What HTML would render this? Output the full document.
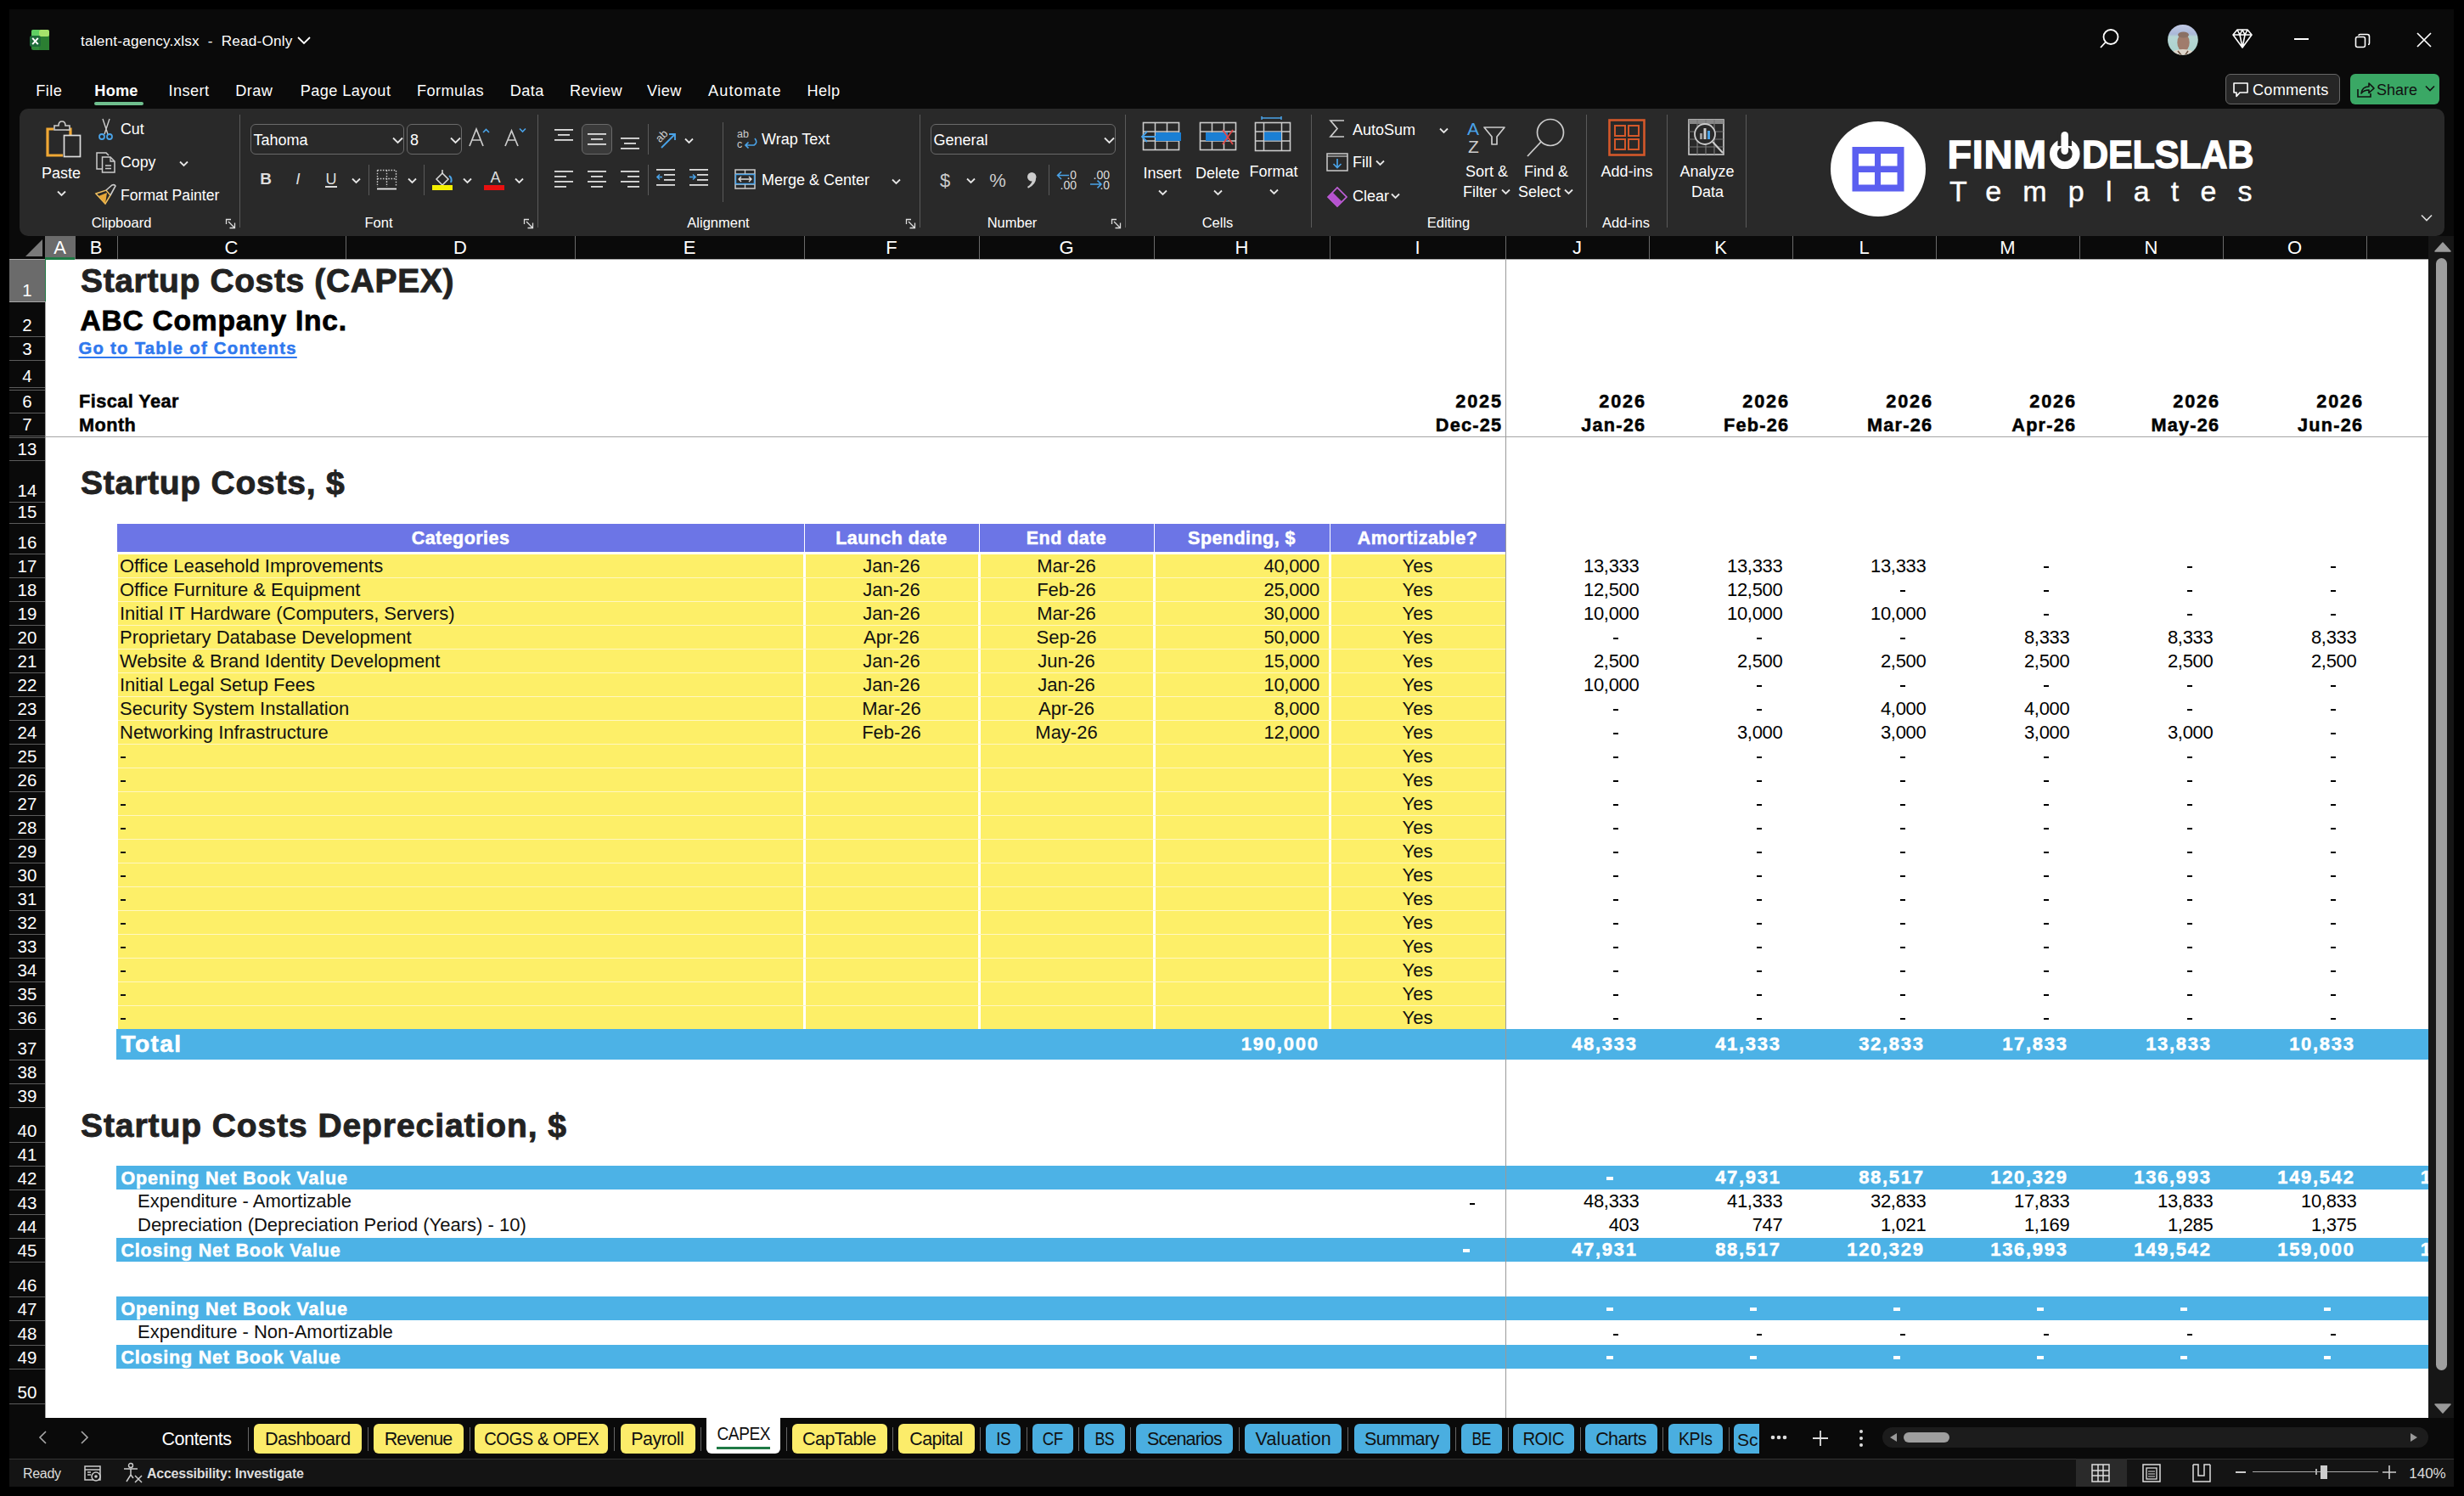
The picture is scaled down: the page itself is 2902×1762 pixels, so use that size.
<!DOCTYPE html><html><head><meta charset="utf-8"><style>
html,body{margin:0;padding:0}
body{width:2902px;height:1762px;background:#000;position:relative;overflow:hidden;font-family:"Liberation Sans", sans-serif}
.t{position:absolute;white-space:pre;line-height:1}
.r{position:absolute}
svg{position:absolute;overflow:visible}
</style></head><body><div class="r" style="left:11px;top:11px;width:2879px;height:1740px;background:#0a0a0a;"></div>
<div class="r" style="left:53px;top:305px;width:2807px;height:1365px;background:#ffffff;"></div>
<div style="position:absolute;left:53px;top:305px;width:2807px;height:1365px;overflow:hidden">
<div style="position:absolute;left:-53px;top:-305px;width:2902px;height:1762px">
<div class="t" style="top:311.3px;font-size:39px;color:#222;font-weight:700;letter-spacing:0.63px;-webkit-text-stroke:0.9px #222;left:95.0px;">Startup Costs (CAPEX)</div>
<div class="t" style="top:360.5px;font-size:33.5px;color:#000;font-weight:700;letter-spacing:0.8px;-webkit-text-stroke:0.8px #000;left:94.5px;">ABC Company Inc.</div>
<div class="t" style="top:400.1px;font-size:20.3px;color:#2f78ee;font-weight:700;letter-spacing:1.26px;-webkit-text-stroke:0.5px #2f78ee;left:92.5px;text-decoration:underline;text-decoration-thickness:2px;text-underline-offset:3px;">Go to Table of Contents</div>
<div class="t" style="top:462.2px;font-size:21.7px;color:#000;font-weight:700;letter-spacing:0.45px;-webkit-text-stroke:0.5px #000;left:93.0px;">Fiscal Year</div>
<div class="t" style="top:490.0px;font-size:21.7px;color:#000;font-weight:700;letter-spacing:0.45px;-webkit-text-stroke:0.5px #000;left:93.0px;">Month</div>
<div class="t" style="top:462.2px;font-size:21.7px;color:#000;font-weight:700;letter-spacing:1.8px;-webkit-text-stroke:0.5px #000;right:1134.0px;margin-right:-1.8px;">2025</div>
<div class="t" style="top:490.0px;font-size:21.7px;color:#000;font-weight:700;letter-spacing:1.2px;-webkit-text-stroke:0.5px #000;right:1134.0px;margin-right:-1.2px;">Dec-25</div>
<div class="t" style="top:462.2px;font-size:21.7px;color:#000;font-weight:700;letter-spacing:1.8px;-webkit-text-stroke:0.5px #000;right:965.0px;margin-right:-1.8px;">2026</div>
<div class="t" style="top:490.0px;font-size:21.7px;color:#000;font-weight:700;letter-spacing:1.2px;-webkit-text-stroke:0.5px #000;right:965.0px;margin-right:-1.2px;">Jan-26</div>
<div class="t" style="top:462.2px;font-size:21.7px;color:#000;font-weight:700;letter-spacing:1.8px;-webkit-text-stroke:0.5px #000;right:796.0px;margin-right:-1.8px;">2026</div>
<div class="t" style="top:490.0px;font-size:21.7px;color:#000;font-weight:700;letter-spacing:1.2px;-webkit-text-stroke:0.5px #000;right:796.0px;margin-right:-1.2px;">Feb-26</div>
<div class="t" style="top:462.2px;font-size:21.7px;color:#000;font-weight:700;letter-spacing:1.8px;-webkit-text-stroke:0.5px #000;right:627.0px;margin-right:-1.8px;">2026</div>
<div class="t" style="top:490.0px;font-size:21.7px;color:#000;font-weight:700;letter-spacing:1.2px;-webkit-text-stroke:0.5px #000;right:627.0px;margin-right:-1.2px;">Mar-26</div>
<div class="t" style="top:462.2px;font-size:21.7px;color:#000;font-weight:700;letter-spacing:1.8px;-webkit-text-stroke:0.5px #000;right:458.0px;margin-right:-1.8px;">2026</div>
<div class="t" style="top:490.0px;font-size:21.7px;color:#000;font-weight:700;letter-spacing:1.2px;-webkit-text-stroke:0.5px #000;right:458.0px;margin-right:-1.2px;">Apr-26</div>
<div class="t" style="top:462.2px;font-size:21.7px;color:#000;font-weight:700;letter-spacing:1.8px;-webkit-text-stroke:0.5px #000;right:289.0px;margin-right:-1.8px;">2026</div>
<div class="t" style="top:490.0px;font-size:21.7px;color:#000;font-weight:700;letter-spacing:1.2px;-webkit-text-stroke:0.5px #000;right:289.0px;margin-right:-1.2px;">May-26</div>
<div class="t" style="top:462.2px;font-size:21.7px;color:#000;font-weight:700;letter-spacing:1.8px;-webkit-text-stroke:0.5px #000;right:120.0px;margin-right:-1.8px;">2026</div>
<div class="t" style="top:490.0px;font-size:21.7px;color:#000;font-weight:700;letter-spacing:1.2px;-webkit-text-stroke:0.5px #000;right:120.0px;margin-right:-1.2px;">Jun-26</div>
<div class="r" style="left:53px;top:514px;width:2807px;height:1px;background:#a6a6a6;"></div>
<div class="t" style="top:548.5px;font-size:39px;color:#222;font-weight:700;letter-spacing:0.78px;-webkit-text-stroke:0.9px #222;left:95.0px;">Startup Costs, $</div>
<div class="r" style="left:138px;top:617px;width:809px;height:33px;background:#6c75e6;"></div>
<div class="r" style="left:948px;top:617px;width:205px;height:33px;background:#6c75e6;"></div>
<div class="r" style="left:1154px;top:617px;width:205px;height:33px;background:#6c75e6;"></div>
<div class="r" style="left:1360px;top:617px;width:206px;height:33px;background:#6c75e6;"></div>
<div class="r" style="left:1567px;top:617px;width:206px;height:33px;background:#6c75e6;"></div>
<div class="t" style="top:623.8px;font-size:21.5px;color:#fff;font-weight:700;letter-spacing:0.45px;-webkit-text-stroke:0.5px #fff;left:-57.5px;width:1200px;text-align:center;">Categories</div>
<div class="t" style="top:623.8px;font-size:21.5px;color:#fff;font-weight:700;letter-spacing:0.45px;-webkit-text-stroke:0.5px #fff;left:450.0px;width:1200px;text-align:center;">Launch date</div>
<div class="t" style="top:623.8px;font-size:21.5px;color:#fff;font-weight:700;letter-spacing:0.45px;-webkit-text-stroke:0.5px #fff;left:656.0px;width:1200px;text-align:center;">End date</div>
<div class="t" style="top:623.8px;font-size:21.5px;color:#fff;font-weight:700;letter-spacing:0.45px;-webkit-text-stroke:0.5px #fff;left:862.5px;width:1200px;text-align:center;">Spending, $</div>
<div class="t" style="top:623.8px;font-size:21.5px;color:#fff;font-weight:700;letter-spacing:0.45px;-webkit-text-stroke:0.5px #fff;left:1069.5px;width:1200px;text-align:center;">Amortizable?</div>
<div class="r" style="left:139px;top:653px;width:807px;height:27px;background:#fdef68;"></div>
<div class="r" style="left:949px;top:653px;width:203px;height:27px;background:#fdef68;"></div>
<div class="r" style="left:1155px;top:653px;width:203px;height:27px;background:#fdef68;"></div>
<div class="r" style="left:1361px;top:653px;width:204px;height:27px;background:#fdef68;"></div>
<div class="r" style="left:1568px;top:653px;width:205px;height:27px;background:#fdef68;"></div>
<div class="t" style="top:655.9px;font-size:22px;color:#111;left:141.0px;">Office Leasehold Improvements</div>
<div class="t" style="top:655.9px;font-size:22px;color:#111;left:450.0px;width:1200px;text-align:center;">Jan-26</div>
<div class="t" style="top:655.9px;font-size:22px;color:#111;left:656.0px;width:1200px;text-align:center;">Mar-26</div>
<div class="t" style="top:655.9px;font-size:22px;color:#111;letter-spacing:-0.3px;right:1348.0px;margin-right:--0.3px;">40,000</div>
<div class="t" style="top:655.9px;font-size:22px;color:#000;letter-spacing:-0.3px;right:971.5px;margin-right:--0.3px;">13,333</div>
<div class="t" style="top:655.9px;font-size:22px;color:#000;letter-spacing:-0.3px;right:802.5px;margin-right:--0.3px;">13,333</div>
<div class="t" style="top:655.9px;font-size:22px;color:#000;letter-spacing:-0.3px;right:633.5px;margin-right:--0.3px;">13,333</div>
<div class="r" style="left:2407px;top:667px;width:6px;height:2px;background:#000;"></div>
<div class="r" style="left:2576px;top:667px;width:6px;height:2px;background:#000;"></div>
<div class="r" style="left:2745px;top:667px;width:6px;height:2px;background:#000;"></div>
<div class="t" style="top:655.9px;font-size:22px;color:#111;left:1069.5px;width:1200px;text-align:center;">Yes</div>
<div class="r" style="left:139px;top:680px;width:1634px;height:1px;background:#fff7c0;"></div>
<div class="r" style="left:139px;top:681px;width:807px;height:27px;background:#fdef68;"></div>
<div class="r" style="left:949px;top:681px;width:203px;height:27px;background:#fdef68;"></div>
<div class="r" style="left:1155px;top:681px;width:203px;height:27px;background:#fdef68;"></div>
<div class="r" style="left:1361px;top:681px;width:204px;height:27px;background:#fdef68;"></div>
<div class="r" style="left:1568px;top:681px;width:205px;height:27px;background:#fdef68;"></div>
<div class="t" style="top:683.9px;font-size:22px;color:#111;left:141.0px;">Office Furniture &amp; Equipment</div>
<div class="t" style="top:683.9px;font-size:22px;color:#111;left:450.0px;width:1200px;text-align:center;">Jan-26</div>
<div class="t" style="top:683.9px;font-size:22px;color:#111;left:656.0px;width:1200px;text-align:center;">Feb-26</div>
<div class="t" style="top:683.9px;font-size:22px;color:#111;letter-spacing:-0.3px;right:1348.0px;margin-right:--0.3px;">25,000</div>
<div class="t" style="top:683.9px;font-size:22px;color:#000;letter-spacing:-0.3px;right:971.5px;margin-right:--0.3px;">12,500</div>
<div class="t" style="top:683.9px;font-size:22px;color:#000;letter-spacing:-0.3px;right:802.5px;margin-right:--0.3px;">12,500</div>
<div class="r" style="left:2238px;top:695px;width:6px;height:2px;background:#000;"></div>
<div class="r" style="left:2407px;top:695px;width:6px;height:2px;background:#000;"></div>
<div class="r" style="left:2576px;top:695px;width:6px;height:2px;background:#000;"></div>
<div class="r" style="left:2745px;top:695px;width:6px;height:2px;background:#000;"></div>
<div class="t" style="top:683.9px;font-size:22px;color:#111;left:1069.5px;width:1200px;text-align:center;">Yes</div>
<div class="r" style="left:139px;top:708px;width:1634px;height:1px;background:#fff7c0;"></div>
<div class="r" style="left:139px;top:709px;width:807px;height:27px;background:#fdef68;"></div>
<div class="r" style="left:949px;top:709px;width:203px;height:27px;background:#fdef68;"></div>
<div class="r" style="left:1155px;top:709px;width:203px;height:27px;background:#fdef68;"></div>
<div class="r" style="left:1361px;top:709px;width:204px;height:27px;background:#fdef68;"></div>
<div class="r" style="left:1568px;top:709px;width:205px;height:27px;background:#fdef68;"></div>
<div class="t" style="top:711.9px;font-size:22px;color:#111;left:141.0px;">Initial IT Hardware (Computers, Servers)</div>
<div class="t" style="top:711.9px;font-size:22px;color:#111;left:450.0px;width:1200px;text-align:center;">Jan-26</div>
<div class="t" style="top:711.9px;font-size:22px;color:#111;left:656.0px;width:1200px;text-align:center;">Mar-26</div>
<div class="t" style="top:711.9px;font-size:22px;color:#111;letter-spacing:-0.3px;right:1348.0px;margin-right:--0.3px;">30,000</div>
<div class="t" style="top:711.9px;font-size:22px;color:#000;letter-spacing:-0.3px;right:971.5px;margin-right:--0.3px;">10,000</div>
<div class="t" style="top:711.9px;font-size:22px;color:#000;letter-spacing:-0.3px;right:802.5px;margin-right:--0.3px;">10,000</div>
<div class="t" style="top:711.9px;font-size:22px;color:#000;letter-spacing:-0.3px;right:633.5px;margin-right:--0.3px;">10,000</div>
<div class="r" style="left:2407px;top:723px;width:6px;height:2px;background:#000;"></div>
<div class="r" style="left:2576px;top:723px;width:6px;height:2px;background:#000;"></div>
<div class="r" style="left:2745px;top:723px;width:6px;height:2px;background:#000;"></div>
<div class="t" style="top:711.9px;font-size:22px;color:#111;left:1069.5px;width:1200px;text-align:center;">Yes</div>
<div class="r" style="left:139px;top:736px;width:1634px;height:1px;background:#fff7c0;"></div>
<div class="r" style="left:139px;top:737px;width:807px;height:27px;background:#fdef68;"></div>
<div class="r" style="left:949px;top:737px;width:203px;height:27px;background:#fdef68;"></div>
<div class="r" style="left:1155px;top:737px;width:203px;height:27px;background:#fdef68;"></div>
<div class="r" style="left:1361px;top:737px;width:204px;height:27px;background:#fdef68;"></div>
<div class="r" style="left:1568px;top:737px;width:205px;height:27px;background:#fdef68;"></div>
<div class="t" style="top:739.9px;font-size:22px;color:#111;left:141.0px;">Proprietary Database Development</div>
<div class="t" style="top:739.9px;font-size:22px;color:#111;left:450.0px;width:1200px;text-align:center;">Apr-26</div>
<div class="t" style="top:739.9px;font-size:22px;color:#111;left:656.0px;width:1200px;text-align:center;">Sep-26</div>
<div class="t" style="top:739.9px;font-size:22px;color:#111;letter-spacing:-0.3px;right:1348.0px;margin-right:--0.3px;">50,000</div>
<div class="r" style="left:1900px;top:751px;width:6px;height:2px;background:#000;"></div>
<div class="r" style="left:2069px;top:751px;width:6px;height:2px;background:#000;"></div>
<div class="r" style="left:2238px;top:751px;width:6px;height:2px;background:#000;"></div>
<div class="t" style="top:739.9px;font-size:22px;color:#000;letter-spacing:-0.3px;right:464.5px;margin-right:--0.3px;">8,333</div>
<div class="t" style="top:739.9px;font-size:22px;color:#000;letter-spacing:-0.3px;right:295.5px;margin-right:--0.3px;">8,333</div>
<div class="t" style="top:739.9px;font-size:22px;color:#000;letter-spacing:-0.3px;right:126.5px;margin-right:--0.3px;">8,333</div>
<div class="t" style="top:739.9px;font-size:22px;color:#111;left:1069.5px;width:1200px;text-align:center;">Yes</div>
<div class="r" style="left:139px;top:764px;width:1634px;height:1px;background:#fff7c0;"></div>
<div class="r" style="left:139px;top:765px;width:807px;height:27px;background:#fdef68;"></div>
<div class="r" style="left:949px;top:765px;width:203px;height:27px;background:#fdef68;"></div>
<div class="r" style="left:1155px;top:765px;width:203px;height:27px;background:#fdef68;"></div>
<div class="r" style="left:1361px;top:765px;width:204px;height:27px;background:#fdef68;"></div>
<div class="r" style="left:1568px;top:765px;width:205px;height:27px;background:#fdef68;"></div>
<div class="t" style="top:767.9px;font-size:22px;color:#111;left:141.0px;">Website &amp; Brand Identity Development</div>
<div class="t" style="top:767.9px;font-size:22px;color:#111;left:450.0px;width:1200px;text-align:center;">Jan-26</div>
<div class="t" style="top:767.9px;font-size:22px;color:#111;left:656.0px;width:1200px;text-align:center;">Jun-26</div>
<div class="t" style="top:767.9px;font-size:22px;color:#111;letter-spacing:-0.3px;right:1348.0px;margin-right:--0.3px;">15,000</div>
<div class="t" style="top:767.9px;font-size:22px;color:#000;letter-spacing:-0.3px;right:971.5px;margin-right:--0.3px;">2,500</div>
<div class="t" style="top:767.9px;font-size:22px;color:#000;letter-spacing:-0.3px;right:802.5px;margin-right:--0.3px;">2,500</div>
<div class="t" style="top:767.9px;font-size:22px;color:#000;letter-spacing:-0.3px;right:633.5px;margin-right:--0.3px;">2,500</div>
<div class="t" style="top:767.9px;font-size:22px;color:#000;letter-spacing:-0.3px;right:464.5px;margin-right:--0.3px;">2,500</div>
<div class="t" style="top:767.9px;font-size:22px;color:#000;letter-spacing:-0.3px;right:295.5px;margin-right:--0.3px;">2,500</div>
<div class="t" style="top:767.9px;font-size:22px;color:#000;letter-spacing:-0.3px;right:126.5px;margin-right:--0.3px;">2,500</div>
<div class="t" style="top:767.9px;font-size:22px;color:#111;left:1069.5px;width:1200px;text-align:center;">Yes</div>
<div class="r" style="left:139px;top:792px;width:1634px;height:1px;background:#fff7c0;"></div>
<div class="r" style="left:139px;top:793px;width:807px;height:27px;background:#fdef68;"></div>
<div class="r" style="left:949px;top:793px;width:203px;height:27px;background:#fdef68;"></div>
<div class="r" style="left:1155px;top:793px;width:203px;height:27px;background:#fdef68;"></div>
<div class="r" style="left:1361px;top:793px;width:204px;height:27px;background:#fdef68;"></div>
<div class="r" style="left:1568px;top:793px;width:205px;height:27px;background:#fdef68;"></div>
<div class="t" style="top:795.9px;font-size:22px;color:#111;left:141.0px;">Initial Legal Setup Fees</div>
<div class="t" style="top:795.9px;font-size:22px;color:#111;left:450.0px;width:1200px;text-align:center;">Jan-26</div>
<div class="t" style="top:795.9px;font-size:22px;color:#111;left:656.0px;width:1200px;text-align:center;">Jan-26</div>
<div class="t" style="top:795.9px;font-size:22px;color:#111;letter-spacing:-0.3px;right:1348.0px;margin-right:--0.3px;">10,000</div>
<div class="t" style="top:795.9px;font-size:22px;color:#000;letter-spacing:-0.3px;right:971.5px;margin-right:--0.3px;">10,000</div>
<div class="r" style="left:2069px;top:807px;width:6px;height:2px;background:#000;"></div>
<div class="r" style="left:2238px;top:807px;width:6px;height:2px;background:#000;"></div>
<div class="r" style="left:2407px;top:807px;width:6px;height:2px;background:#000;"></div>
<div class="r" style="left:2576px;top:807px;width:6px;height:2px;background:#000;"></div>
<div class="r" style="left:2745px;top:807px;width:6px;height:2px;background:#000;"></div>
<div class="t" style="top:795.9px;font-size:22px;color:#111;left:1069.5px;width:1200px;text-align:center;">Yes</div>
<div class="r" style="left:139px;top:820px;width:1634px;height:1px;background:#fff7c0;"></div>
<div class="r" style="left:139px;top:821px;width:807px;height:27px;background:#fdef68;"></div>
<div class="r" style="left:949px;top:821px;width:203px;height:27px;background:#fdef68;"></div>
<div class="r" style="left:1155px;top:821px;width:203px;height:27px;background:#fdef68;"></div>
<div class="r" style="left:1361px;top:821px;width:204px;height:27px;background:#fdef68;"></div>
<div class="r" style="left:1568px;top:821px;width:205px;height:27px;background:#fdef68;"></div>
<div class="t" style="top:823.9px;font-size:22px;color:#111;left:141.0px;">Security System Installation</div>
<div class="t" style="top:823.9px;font-size:22px;color:#111;left:450.0px;width:1200px;text-align:center;">Mar-26</div>
<div class="t" style="top:823.9px;font-size:22px;color:#111;left:656.0px;width:1200px;text-align:center;">Apr-26</div>
<div class="t" style="top:823.9px;font-size:22px;color:#111;letter-spacing:-0.3px;right:1348.0px;margin-right:--0.3px;">8,000</div>
<div class="r" style="left:1900px;top:835px;width:6px;height:2px;background:#000;"></div>
<div class="r" style="left:2069px;top:835px;width:6px;height:2px;background:#000;"></div>
<div class="t" style="top:823.9px;font-size:22px;color:#000;letter-spacing:-0.3px;right:633.5px;margin-right:--0.3px;">4,000</div>
<div class="t" style="top:823.9px;font-size:22px;color:#000;letter-spacing:-0.3px;right:464.5px;margin-right:--0.3px;">4,000</div>
<div class="r" style="left:2576px;top:835px;width:6px;height:2px;background:#000;"></div>
<div class="r" style="left:2745px;top:835px;width:6px;height:2px;background:#000;"></div>
<div class="t" style="top:823.9px;font-size:22px;color:#111;left:1069.5px;width:1200px;text-align:center;">Yes</div>
<div class="r" style="left:139px;top:848px;width:1634px;height:1px;background:#fff7c0;"></div>
<div class="r" style="left:139px;top:849px;width:807px;height:27px;background:#fdef68;"></div>
<div class="r" style="left:949px;top:849px;width:203px;height:27px;background:#fdef68;"></div>
<div class="r" style="left:1155px;top:849px;width:203px;height:27px;background:#fdef68;"></div>
<div class="r" style="left:1361px;top:849px;width:204px;height:27px;background:#fdef68;"></div>
<div class="r" style="left:1568px;top:849px;width:205px;height:27px;background:#fdef68;"></div>
<div class="t" style="top:851.9px;font-size:22px;color:#111;left:141.0px;">Networking Infrastructure</div>
<div class="t" style="top:851.9px;font-size:22px;color:#111;left:450.0px;width:1200px;text-align:center;">Feb-26</div>
<div class="t" style="top:851.9px;font-size:22px;color:#111;left:656.0px;width:1200px;text-align:center;">May-26</div>
<div class="t" style="top:851.9px;font-size:22px;color:#111;letter-spacing:-0.3px;right:1348.0px;margin-right:--0.3px;">12,000</div>
<div class="r" style="left:1900px;top:863px;width:6px;height:2px;background:#000;"></div>
<div class="t" style="top:851.9px;font-size:22px;color:#000;letter-spacing:-0.3px;right:802.5px;margin-right:--0.3px;">3,000</div>
<div class="t" style="top:851.9px;font-size:22px;color:#000;letter-spacing:-0.3px;right:633.5px;margin-right:--0.3px;">3,000</div>
<div class="t" style="top:851.9px;font-size:22px;color:#000;letter-spacing:-0.3px;right:464.5px;margin-right:--0.3px;">3,000</div>
<div class="t" style="top:851.9px;font-size:22px;color:#000;letter-spacing:-0.3px;right:295.5px;margin-right:--0.3px;">3,000</div>
<div class="r" style="left:2745px;top:863px;width:6px;height:2px;background:#000;"></div>
<div class="t" style="top:851.9px;font-size:22px;color:#111;left:1069.5px;width:1200px;text-align:center;">Yes</div>
<div class="r" style="left:139px;top:876px;width:1634px;height:1px;background:#fff7c0;"></div>
<div class="r" style="left:139px;top:877px;width:807px;height:27px;background:#fdef68;"></div>
<div class="r" style="left:949px;top:877px;width:203px;height:27px;background:#fdef68;"></div>
<div class="r" style="left:1155px;top:877px;width:203px;height:27px;background:#fdef68;"></div>
<div class="r" style="left:1361px;top:877px;width:204px;height:27px;background:#fdef68;"></div>
<div class="r" style="left:1568px;top:877px;width:205px;height:27px;background:#fdef68;"></div>
<div class="r" style="left:142px;top:891px;width:6px;height:2px;background:#111;"></div>
<div class="r" style="left:1900px;top:891px;width:6px;height:2px;background:#000;"></div>
<div class="r" style="left:2069px;top:891px;width:6px;height:2px;background:#000;"></div>
<div class="r" style="left:2238px;top:891px;width:6px;height:2px;background:#000;"></div>
<div class="r" style="left:2407px;top:891px;width:6px;height:2px;background:#000;"></div>
<div class="r" style="left:2576px;top:891px;width:6px;height:2px;background:#000;"></div>
<div class="r" style="left:2745px;top:891px;width:6px;height:2px;background:#000;"></div>
<div class="t" style="top:879.9px;font-size:22px;color:#111;left:1069.5px;width:1200px;text-align:center;">Yes</div>
<div class="r" style="left:139px;top:904px;width:1634px;height:1px;background:#fff7c0;"></div>
<div class="r" style="left:139px;top:905px;width:807px;height:27px;background:#fdef68;"></div>
<div class="r" style="left:949px;top:905px;width:203px;height:27px;background:#fdef68;"></div>
<div class="r" style="left:1155px;top:905px;width:203px;height:27px;background:#fdef68;"></div>
<div class="r" style="left:1361px;top:905px;width:204px;height:27px;background:#fdef68;"></div>
<div class="r" style="left:1568px;top:905px;width:205px;height:27px;background:#fdef68;"></div>
<div class="r" style="left:142px;top:919px;width:6px;height:2px;background:#111;"></div>
<div class="r" style="left:1900px;top:919px;width:6px;height:2px;background:#000;"></div>
<div class="r" style="left:2069px;top:919px;width:6px;height:2px;background:#000;"></div>
<div class="r" style="left:2238px;top:919px;width:6px;height:2px;background:#000;"></div>
<div class="r" style="left:2407px;top:919px;width:6px;height:2px;background:#000;"></div>
<div class="r" style="left:2576px;top:919px;width:6px;height:2px;background:#000;"></div>
<div class="r" style="left:2745px;top:919px;width:6px;height:2px;background:#000;"></div>
<div class="t" style="top:907.9px;font-size:22px;color:#111;left:1069.5px;width:1200px;text-align:center;">Yes</div>
<div class="r" style="left:139px;top:932px;width:1634px;height:1px;background:#fff7c0;"></div>
<div class="r" style="left:139px;top:933px;width:807px;height:27px;background:#fdef68;"></div>
<div class="r" style="left:949px;top:933px;width:203px;height:27px;background:#fdef68;"></div>
<div class="r" style="left:1155px;top:933px;width:203px;height:27px;background:#fdef68;"></div>
<div class="r" style="left:1361px;top:933px;width:204px;height:27px;background:#fdef68;"></div>
<div class="r" style="left:1568px;top:933px;width:205px;height:27px;background:#fdef68;"></div>
<div class="r" style="left:142px;top:947px;width:6px;height:2px;background:#111;"></div>
<div class="r" style="left:1900px;top:947px;width:6px;height:2px;background:#000;"></div>
<div class="r" style="left:2069px;top:947px;width:6px;height:2px;background:#000;"></div>
<div class="r" style="left:2238px;top:947px;width:6px;height:2px;background:#000;"></div>
<div class="r" style="left:2407px;top:947px;width:6px;height:2px;background:#000;"></div>
<div class="r" style="left:2576px;top:947px;width:6px;height:2px;background:#000;"></div>
<div class="r" style="left:2745px;top:947px;width:6px;height:2px;background:#000;"></div>
<div class="t" style="top:935.9px;font-size:22px;color:#111;left:1069.5px;width:1200px;text-align:center;">Yes</div>
<div class="r" style="left:139px;top:960px;width:1634px;height:1px;background:#fff7c0;"></div>
<div class="r" style="left:139px;top:961px;width:807px;height:27px;background:#fdef68;"></div>
<div class="r" style="left:949px;top:961px;width:203px;height:27px;background:#fdef68;"></div>
<div class="r" style="left:1155px;top:961px;width:203px;height:27px;background:#fdef68;"></div>
<div class="r" style="left:1361px;top:961px;width:204px;height:27px;background:#fdef68;"></div>
<div class="r" style="left:1568px;top:961px;width:205px;height:27px;background:#fdef68;"></div>
<div class="r" style="left:142px;top:975px;width:6px;height:2px;background:#111;"></div>
<div class="r" style="left:1900px;top:975px;width:6px;height:2px;background:#000;"></div>
<div class="r" style="left:2069px;top:975px;width:6px;height:2px;background:#000;"></div>
<div class="r" style="left:2238px;top:975px;width:6px;height:2px;background:#000;"></div>
<div class="r" style="left:2407px;top:975px;width:6px;height:2px;background:#000;"></div>
<div class="r" style="left:2576px;top:975px;width:6px;height:2px;background:#000;"></div>
<div class="r" style="left:2745px;top:975px;width:6px;height:2px;background:#000;"></div>
<div class="t" style="top:963.9px;font-size:22px;color:#111;left:1069.5px;width:1200px;text-align:center;">Yes</div>
<div class="r" style="left:139px;top:988px;width:1634px;height:1px;background:#fff7c0;"></div>
<div class="r" style="left:139px;top:989px;width:807px;height:27px;background:#fdef68;"></div>
<div class="r" style="left:949px;top:989px;width:203px;height:27px;background:#fdef68;"></div>
<div class="r" style="left:1155px;top:989px;width:203px;height:27px;background:#fdef68;"></div>
<div class="r" style="left:1361px;top:989px;width:204px;height:27px;background:#fdef68;"></div>
<div class="r" style="left:1568px;top:989px;width:205px;height:27px;background:#fdef68;"></div>
<div class="r" style="left:142px;top:1003px;width:6px;height:2px;background:#111;"></div>
<div class="r" style="left:1900px;top:1003px;width:6px;height:2px;background:#000;"></div>
<div class="r" style="left:2069px;top:1003px;width:6px;height:2px;background:#000;"></div>
<div class="r" style="left:2238px;top:1003px;width:6px;height:2px;background:#000;"></div>
<div class="r" style="left:2407px;top:1003px;width:6px;height:2px;background:#000;"></div>
<div class="r" style="left:2576px;top:1003px;width:6px;height:2px;background:#000;"></div>
<div class="r" style="left:2745px;top:1003px;width:6px;height:2px;background:#000;"></div>
<div class="t" style="top:991.9px;font-size:22px;color:#111;left:1069.5px;width:1200px;text-align:center;">Yes</div>
<div class="r" style="left:139px;top:1016px;width:1634px;height:1px;background:#fff7c0;"></div>
<div class="r" style="left:139px;top:1017px;width:807px;height:27px;background:#fdef68;"></div>
<div class="r" style="left:949px;top:1017px;width:203px;height:27px;background:#fdef68;"></div>
<div class="r" style="left:1155px;top:1017px;width:203px;height:27px;background:#fdef68;"></div>
<div class="r" style="left:1361px;top:1017px;width:204px;height:27px;background:#fdef68;"></div>
<div class="r" style="left:1568px;top:1017px;width:205px;height:27px;background:#fdef68;"></div>
<div class="r" style="left:142px;top:1031px;width:6px;height:2px;background:#111;"></div>
<div class="r" style="left:1900px;top:1031px;width:6px;height:2px;background:#000;"></div>
<div class="r" style="left:2069px;top:1031px;width:6px;height:2px;background:#000;"></div>
<div class="r" style="left:2238px;top:1031px;width:6px;height:2px;background:#000;"></div>
<div class="r" style="left:2407px;top:1031px;width:6px;height:2px;background:#000;"></div>
<div class="r" style="left:2576px;top:1031px;width:6px;height:2px;background:#000;"></div>
<div class="r" style="left:2745px;top:1031px;width:6px;height:2px;background:#000;"></div>
<div class="t" style="top:1019.9px;font-size:22px;color:#111;left:1069.5px;width:1200px;text-align:center;">Yes</div>
<div class="r" style="left:139px;top:1044px;width:1634px;height:1px;background:#fff7c0;"></div>
<div class="r" style="left:139px;top:1045px;width:807px;height:27px;background:#fdef68;"></div>
<div class="r" style="left:949px;top:1045px;width:203px;height:27px;background:#fdef68;"></div>
<div class="r" style="left:1155px;top:1045px;width:203px;height:27px;background:#fdef68;"></div>
<div class="r" style="left:1361px;top:1045px;width:204px;height:27px;background:#fdef68;"></div>
<div class="r" style="left:1568px;top:1045px;width:205px;height:27px;background:#fdef68;"></div>
<div class="r" style="left:142px;top:1059px;width:6px;height:2px;background:#111;"></div>
<div class="r" style="left:1900px;top:1059px;width:6px;height:2px;background:#000;"></div>
<div class="r" style="left:2069px;top:1059px;width:6px;height:2px;background:#000;"></div>
<div class="r" style="left:2238px;top:1059px;width:6px;height:2px;background:#000;"></div>
<div class="r" style="left:2407px;top:1059px;width:6px;height:2px;background:#000;"></div>
<div class="r" style="left:2576px;top:1059px;width:6px;height:2px;background:#000;"></div>
<div class="r" style="left:2745px;top:1059px;width:6px;height:2px;background:#000;"></div>
<div class="t" style="top:1047.9px;font-size:22px;color:#111;left:1069.5px;width:1200px;text-align:center;">Yes</div>
<div class="r" style="left:139px;top:1072px;width:1634px;height:1px;background:#fff7c0;"></div>
<div class="r" style="left:139px;top:1073px;width:807px;height:27px;background:#fdef68;"></div>
<div class="r" style="left:949px;top:1073px;width:203px;height:27px;background:#fdef68;"></div>
<div class="r" style="left:1155px;top:1073px;width:203px;height:27px;background:#fdef68;"></div>
<div class="r" style="left:1361px;top:1073px;width:204px;height:27px;background:#fdef68;"></div>
<div class="r" style="left:1568px;top:1073px;width:205px;height:27px;background:#fdef68;"></div>
<div class="r" style="left:142px;top:1087px;width:6px;height:2px;background:#111;"></div>
<div class="r" style="left:1900px;top:1087px;width:6px;height:2px;background:#000;"></div>
<div class="r" style="left:2069px;top:1087px;width:6px;height:2px;background:#000;"></div>
<div class="r" style="left:2238px;top:1087px;width:6px;height:2px;background:#000;"></div>
<div class="r" style="left:2407px;top:1087px;width:6px;height:2px;background:#000;"></div>
<div class="r" style="left:2576px;top:1087px;width:6px;height:2px;background:#000;"></div>
<div class="r" style="left:2745px;top:1087px;width:6px;height:2px;background:#000;"></div>
<div class="t" style="top:1075.9px;font-size:22px;color:#111;left:1069.5px;width:1200px;text-align:center;">Yes</div>
<div class="r" style="left:139px;top:1100px;width:1634px;height:1px;background:#fff7c0;"></div>
<div class="r" style="left:139px;top:1101px;width:807px;height:27px;background:#fdef68;"></div>
<div class="r" style="left:949px;top:1101px;width:203px;height:27px;background:#fdef68;"></div>
<div class="r" style="left:1155px;top:1101px;width:203px;height:27px;background:#fdef68;"></div>
<div class="r" style="left:1361px;top:1101px;width:204px;height:27px;background:#fdef68;"></div>
<div class="r" style="left:1568px;top:1101px;width:205px;height:27px;background:#fdef68;"></div>
<div class="r" style="left:142px;top:1115px;width:6px;height:2px;background:#111;"></div>
<div class="r" style="left:1900px;top:1115px;width:6px;height:2px;background:#000;"></div>
<div class="r" style="left:2069px;top:1115px;width:6px;height:2px;background:#000;"></div>
<div class="r" style="left:2238px;top:1115px;width:6px;height:2px;background:#000;"></div>
<div class="r" style="left:2407px;top:1115px;width:6px;height:2px;background:#000;"></div>
<div class="r" style="left:2576px;top:1115px;width:6px;height:2px;background:#000;"></div>
<div class="r" style="left:2745px;top:1115px;width:6px;height:2px;background:#000;"></div>
<div class="t" style="top:1103.9px;font-size:22px;color:#111;left:1069.5px;width:1200px;text-align:center;">Yes</div>
<div class="r" style="left:139px;top:1128px;width:1634px;height:1px;background:#fff7c0;"></div>
<div class="r" style="left:139px;top:1129px;width:807px;height:27px;background:#fdef68;"></div>
<div class="r" style="left:949px;top:1129px;width:203px;height:27px;background:#fdef68;"></div>
<div class="r" style="left:1155px;top:1129px;width:203px;height:27px;background:#fdef68;"></div>
<div class="r" style="left:1361px;top:1129px;width:204px;height:27px;background:#fdef68;"></div>
<div class="r" style="left:1568px;top:1129px;width:205px;height:27px;background:#fdef68;"></div>
<div class="r" style="left:142px;top:1143px;width:6px;height:2px;background:#111;"></div>
<div class="r" style="left:1900px;top:1143px;width:6px;height:2px;background:#000;"></div>
<div class="r" style="left:2069px;top:1143px;width:6px;height:2px;background:#000;"></div>
<div class="r" style="left:2238px;top:1143px;width:6px;height:2px;background:#000;"></div>
<div class="r" style="left:2407px;top:1143px;width:6px;height:2px;background:#000;"></div>
<div class="r" style="left:2576px;top:1143px;width:6px;height:2px;background:#000;"></div>
<div class="r" style="left:2745px;top:1143px;width:6px;height:2px;background:#000;"></div>
<div class="t" style="top:1131.9px;font-size:22px;color:#111;left:1069.5px;width:1200px;text-align:center;">Yes</div>
<div class="r" style="left:139px;top:1156px;width:1634px;height:1px;background:#fff7c0;"></div>
<div class="r" style="left:139px;top:1157px;width:807px;height:27px;background:#fdef68;"></div>
<div class="r" style="left:949px;top:1157px;width:203px;height:27px;background:#fdef68;"></div>
<div class="r" style="left:1155px;top:1157px;width:203px;height:27px;background:#fdef68;"></div>
<div class="r" style="left:1361px;top:1157px;width:204px;height:27px;background:#fdef68;"></div>
<div class="r" style="left:1568px;top:1157px;width:205px;height:27px;background:#fdef68;"></div>
<div class="r" style="left:142px;top:1171px;width:6px;height:2px;background:#111;"></div>
<div class="r" style="left:1900px;top:1171px;width:6px;height:2px;background:#000;"></div>
<div class="r" style="left:2069px;top:1171px;width:6px;height:2px;background:#000;"></div>
<div class="r" style="left:2238px;top:1171px;width:6px;height:2px;background:#000;"></div>
<div class="r" style="left:2407px;top:1171px;width:6px;height:2px;background:#000;"></div>
<div class="r" style="left:2576px;top:1171px;width:6px;height:2px;background:#000;"></div>
<div class="r" style="left:2745px;top:1171px;width:6px;height:2px;background:#000;"></div>
<div class="t" style="top:1159.9px;font-size:22px;color:#111;left:1069.5px;width:1200px;text-align:center;">Yes</div>
<div class="r" style="left:139px;top:1184px;width:1634px;height:1px;background:#fff7c0;"></div>
<div class="r" style="left:139px;top:1185px;width:807px;height:27px;background:#fdef68;"></div>
<div class="r" style="left:949px;top:1185px;width:203px;height:27px;background:#fdef68;"></div>
<div class="r" style="left:1155px;top:1185px;width:203px;height:27px;background:#fdef68;"></div>
<div class="r" style="left:1361px;top:1185px;width:204px;height:27px;background:#fdef68;"></div>
<div class="r" style="left:1568px;top:1185px;width:205px;height:27px;background:#fdef68;"></div>
<div class="r" style="left:142px;top:1199px;width:6px;height:2px;background:#111;"></div>
<div class="r" style="left:1900px;top:1199px;width:6px;height:2px;background:#000;"></div>
<div class="r" style="left:2069px;top:1199px;width:6px;height:2px;background:#000;"></div>
<div class="r" style="left:2238px;top:1199px;width:6px;height:2px;background:#000;"></div>
<div class="r" style="left:2407px;top:1199px;width:6px;height:2px;background:#000;"></div>
<div class="r" style="left:2576px;top:1199px;width:6px;height:2px;background:#000;"></div>
<div class="r" style="left:2745px;top:1199px;width:6px;height:2px;background:#000;"></div>
<div class="t" style="top:1187.9px;font-size:22px;color:#111;left:1069.5px;width:1200px;text-align:center;">Yes</div>
<div class="r" style="left:137px;top:1212px;width:2723px;height:36px;background:#4cb2e6;"></div>
<div class="t" style="top:1216.3px;font-size:28px;color:#fff;font-weight:700;letter-spacing:1.4px;-webkit-text-stroke:0.6px #fff;left:142.5px;">Total</div>
<div class="t" style="top:1219.0px;font-size:22px;color:#fff;font-weight:700;letter-spacing:1.8px;-webkit-text-stroke:0.5px #fff;right:1350.0px;margin-right:-1.8px;">190,000</div>
<div class="t" style="top:1219.0px;font-size:22px;color:#fff;font-weight:700;letter-spacing:1.7px;-webkit-text-stroke:0.5px #fff;right:975.0px;margin-right:-1.7px;">48,333</div>
<div class="t" style="top:1219.0px;font-size:22px;color:#fff;font-weight:700;letter-spacing:1.7px;-webkit-text-stroke:0.5px #fff;right:806.0px;margin-right:-1.7px;">41,333</div>
<div class="t" style="top:1219.0px;font-size:22px;color:#fff;font-weight:700;letter-spacing:1.7px;-webkit-text-stroke:0.5px #fff;right:637.0px;margin-right:-1.7px;">32,833</div>
<div class="t" style="top:1219.0px;font-size:22px;color:#fff;font-weight:700;letter-spacing:1.7px;-webkit-text-stroke:0.5px #fff;right:468.0px;margin-right:-1.7px;">17,833</div>
<div class="t" style="top:1219.0px;font-size:22px;color:#fff;font-weight:700;letter-spacing:1.7px;-webkit-text-stroke:0.5px #fff;right:299.0px;margin-right:-1.7px;">13,833</div>
<div class="t" style="top:1219.0px;font-size:22px;color:#fff;font-weight:700;letter-spacing:1.7px;-webkit-text-stroke:0.5px #fff;right:130.0px;margin-right:-1.7px;">10,833</div>
<div class="t" style="top:1306.3px;font-size:39px;color:#222;font-weight:700;letter-spacing:0.92px;-webkit-text-stroke:0.9px #222;left:95.0px;">Startup Costs Depreciation, $</div>
<div class="r" style="left:137px;top:1373px;width:2723px;height:28px;background:#4cb2e6;"></div>
<div class="t" style="top:1378.0px;font-size:21.5px;color:#fff;font-weight:700;letter-spacing:0.8px;-webkit-text-stroke:0.5px #fff;left:142.5px;">Opening Net Book Value</div>
<div class="r" style="left:1892px;top:1386px;width:8px;height:4px;background:#fff;"></div>
<div class="t" style="top:1376.1px;font-size:22px;color:#fff;font-weight:700;letter-spacing:1.7px;-webkit-text-stroke:0.5px #fff;right:806.0px;margin-right:-1.7px;">47,931</div>
<div class="t" style="top:1376.1px;font-size:22px;color:#fff;font-weight:700;letter-spacing:1.7px;-webkit-text-stroke:0.5px #fff;right:637.0px;margin-right:-1.7px;">88,517</div>
<div class="t" style="top:1376.1px;font-size:22px;color:#fff;font-weight:700;letter-spacing:1.7px;-webkit-text-stroke:0.5px #fff;right:468.0px;margin-right:-1.7px;">120,329</div>
<div class="t" style="top:1376.1px;font-size:22px;color:#fff;font-weight:700;letter-spacing:1.7px;-webkit-text-stroke:0.5px #fff;right:299.0px;margin-right:-1.7px;">136,993</div>
<div class="t" style="top:1376.1px;font-size:22px;color:#fff;font-weight:700;letter-spacing:1.7px;-webkit-text-stroke:0.5px #fff;right:130.0px;margin-right:-1.7px;">149,542</div>
<div class="t" style="top:1376.1px;font-size:22px;color:#fff;font-weight:700;-webkit-text-stroke:0.5px #fff;right:39.0px;">1</div>
<div class="t" style="top:1404.1px;font-size:22px;color:#111;left:162.0px;">Expenditure - Amortizable</div>
<div class="r" style="left:1731px;top:1417px;width:6px;height:2px;background:#000;"></div>
<div class="t" style="top:1404.1px;font-size:22px;color:#000;letter-spacing:-0.3px;right:971.5px;margin-right:--0.3px;">48,333</div>
<div class="t" style="top:1404.1px;font-size:22px;color:#000;letter-spacing:-0.3px;right:802.5px;margin-right:--0.3px;">41,333</div>
<div class="t" style="top:1404.1px;font-size:22px;color:#000;letter-spacing:-0.3px;right:633.5px;margin-right:--0.3px;">32,833</div>
<div class="t" style="top:1404.1px;font-size:22px;color:#000;letter-spacing:-0.3px;right:464.5px;margin-right:--0.3px;">17,833</div>
<div class="t" style="top:1404.1px;font-size:22px;color:#000;letter-spacing:-0.3px;right:295.5px;margin-right:--0.3px;">13,833</div>
<div class="t" style="top:1404.1px;font-size:22px;color:#000;letter-spacing:-0.3px;right:126.5px;margin-right:--0.3px;">10,833</div>
<div class="t" style="top:1432.4px;font-size:22px;color:#111;left:162.0px;">Depreciation (Depreciation Period (Years) - 10)</div>
<div class="t" style="top:1432.4px;font-size:22px;color:#000;letter-spacing:-0.3px;right:971.5px;margin-right:--0.3px;">403</div>
<div class="t" style="top:1432.4px;font-size:22px;color:#000;letter-spacing:-0.3px;right:802.5px;margin-right:--0.3px;">747</div>
<div class="t" style="top:1432.4px;font-size:22px;color:#000;letter-spacing:-0.3px;right:633.5px;margin-right:--0.3px;">1,021</div>
<div class="t" style="top:1432.4px;font-size:22px;color:#000;letter-spacing:-0.3px;right:464.5px;margin-right:--0.3px;">1,169</div>
<div class="t" style="top:1432.4px;font-size:22px;color:#000;letter-spacing:-0.3px;right:295.5px;margin-right:--0.3px;">1,285</div>
<div class="t" style="top:1432.4px;font-size:22px;color:#000;letter-spacing:-0.3px;right:126.5px;margin-right:--0.3px;">1,375</div>
<div class="r" style="left:137px;top:1458px;width:2723px;height:28px;background:#4cb2e6;"></div>
<div class="t" style="top:1463.0px;font-size:21.5px;color:#fff;font-weight:700;letter-spacing:0.8px;-webkit-text-stroke:0.5px #fff;left:142.5px;">Closing Net Book Value</div>
<div class="r" style="left:1723px;top:1471px;width:8px;height:4px;background:#fff;"></div>
<div class="t" style="top:1461.1px;font-size:22px;color:#fff;font-weight:700;letter-spacing:1.7px;-webkit-text-stroke:0.5px #fff;right:975.0px;margin-right:-1.7px;">47,931</div>
<div class="t" style="top:1461.1px;font-size:22px;color:#fff;font-weight:700;letter-spacing:1.7px;-webkit-text-stroke:0.5px #fff;right:806.0px;margin-right:-1.7px;">88,517</div>
<div class="t" style="top:1461.1px;font-size:22px;color:#fff;font-weight:700;letter-spacing:1.7px;-webkit-text-stroke:0.5px #fff;right:637.0px;margin-right:-1.7px;">120,329</div>
<div class="t" style="top:1461.1px;font-size:22px;color:#fff;font-weight:700;letter-spacing:1.7px;-webkit-text-stroke:0.5px #fff;right:468.0px;margin-right:-1.7px;">136,993</div>
<div class="t" style="top:1461.1px;font-size:22px;color:#fff;font-weight:700;letter-spacing:1.7px;-webkit-text-stroke:0.5px #fff;right:299.0px;margin-right:-1.7px;">149,542</div>
<div class="t" style="top:1461.1px;font-size:22px;color:#fff;font-weight:700;letter-spacing:1.7px;-webkit-text-stroke:0.5px #fff;right:130.0px;margin-right:-1.7px;">159,000</div>
<div class="t" style="top:1461.1px;font-size:22px;color:#fff;font-weight:700;-webkit-text-stroke:0.5px #fff;right:39.0px;">1</div>
<div class="r" style="left:137px;top:1527px;width:2723px;height:28px;background:#4cb2e6;"></div>
<div class="t" style="top:1532.0px;font-size:21.5px;color:#fff;font-weight:700;letter-spacing:0.8px;-webkit-text-stroke:0.5px #fff;left:142.5px;">Opening Net Book Value</div>
<div class="r" style="left:1892px;top:1540px;width:8px;height:4px;background:#fff;"></div>
<div class="r" style="left:2061px;top:1540px;width:8px;height:4px;background:#fff;"></div>
<div class="r" style="left:2230px;top:1540px;width:8px;height:4px;background:#fff;"></div>
<div class="r" style="left:2399px;top:1540px;width:8px;height:4px;background:#fff;"></div>
<div class="r" style="left:2568px;top:1540px;width:8px;height:4px;background:#fff;"></div>
<div class="r" style="left:2737px;top:1540px;width:8px;height:4px;background:#fff;"></div>
<div class="t" style="top:1558.4px;font-size:22px;color:#111;left:162.0px;">Expenditure - Non-Amortizable</div>
<div class="r" style="left:1900px;top:1571px;width:6px;height:2px;background:#000;"></div>
<div class="r" style="left:2069px;top:1571px;width:6px;height:2px;background:#000;"></div>
<div class="r" style="left:2238px;top:1571px;width:6px;height:2px;background:#000;"></div>
<div class="r" style="left:2407px;top:1571px;width:6px;height:2px;background:#000;"></div>
<div class="r" style="left:2576px;top:1571px;width:6px;height:2px;background:#000;"></div>
<div class="r" style="left:2745px;top:1571px;width:6px;height:2px;background:#000;"></div>
<div class="r" style="left:137px;top:1584px;width:2723px;height:28px;background:#4cb2e6;"></div>
<div class="t" style="top:1589.0px;font-size:21.5px;color:#fff;font-weight:700;letter-spacing:0.8px;-webkit-text-stroke:0.5px #fff;left:142.5px;">Closing Net Book Value</div>
<div class="r" style="left:1892px;top:1597px;width:8px;height:4px;background:#fff;"></div>
<div class="r" style="left:2061px;top:1597px;width:8px;height:4px;background:#fff;"></div>
<div class="r" style="left:2230px;top:1597px;width:8px;height:4px;background:#fff;"></div>
<div class="r" style="left:2399px;top:1597px;width:8px;height:4px;background:#fff;"></div>
<div class="r" style="left:2568px;top:1597px;width:8px;height:4px;background:#fff;"></div>
<div class="r" style="left:2737px;top:1597px;width:8px;height:4px;background:#fff;"></div>
<div class="r" style="left:1773px;top:305px;width:1px;height:1365px;background:#9a9a9a;"></div>
</div></div>
<svg style="left:33px;top:33px;" width="28" height="28" viewBox="0 0 28 28"><rect x="4" y="2" width="21" height="24" rx="2.5" fill="#2f8a3a"/>
<rect x="4" y="2" width="10.5" height="8" rx="2" fill="#5fcf63"/><rect x="13" y="2" width="12" height="8" rx="2" fill="#a5e36b"/>
<rect x="13" y="10" width="12" height="16" fill="#2b7f32"/>
<rect x="2" y="9" width="13" height="13" rx="2.5" fill="#1e6b3a"/>
<path d="M5.2 11.8 L11.8 19.2 M11.8 11.8 L5.2 19.2" stroke="#fff" stroke-width="2"/></svg>
<div class="t" style="top:40.4px;font-size:17.2px;color:#ffffff;letter-spacing:0.2px;left:95.0px;">talent-agency.xlsx  -  Read-Only</div>
<svg style="left:349px;top:40px;" width="18" height="14" viewBox="0 0 18 14"><path d="M2 4 L9 11 L16 4" stroke="#fff" stroke-width="1.8" fill="none"/></svg>
<svg style="left:2470px;top:30px;" width="30" height="32" viewBox="0 0 30 32"><circle cx="16" cy="13.5" r="8.5" stroke="#fff" stroke-width="1.8" fill="none"/><path d="M10 19.5 L4 26" stroke="#fff" stroke-width="1.8"/></svg>
<svg style="left:2552px;top:28px;" width="38" height="38" viewBox="0 0 38 38"><defs><clipPath id="av"><circle cx="18.9" cy="18.9" r="17.9"/></clipPath><linearGradient id="avg" x1="0" y1="0" x2="0" y2="1"><stop offset="0" stop-color="#c4cce6"/><stop offset="0.32" stop-color="#aab8d8"/><stop offset="0.4" stop-color="#b6d6d4"/><stop offset="1" stop-color="#a9d2cc"/></linearGradient></defs>
<g clip-path="url(#av)"><rect width="38" height="38" fill="url(#avg)"/>

<ellipse cx="19.5" cy="22" rx="7.2" ry="10.5" fill="#a07c6c"/><ellipse cx="19.5" cy="13" rx="6.5" ry="3.5" fill="#8a7064"/>
<ellipse cx="19" cy="39.5" rx="17" ry="9.5" fill="#ddd5ca"/><path d="M13 32 L19.5 40 L25 32" stroke="#6a5040" stroke-width="1.5" fill="none"/></g></svg>
<svg style="left:2627px;top:32px;" width="28" height="28" viewBox="0 0 28 28"><path d="M3 9 L8 3 L20 3 L25 9 L14 24 Z M3 9 L25 9 M8 3 L11 9 L14 24 L17 9 L20 3 M11 9 L14 3 L17 9" stroke="#fff" stroke-width="1.6" fill="none" stroke-linejoin="round"/></svg>
<div class="r" style="left:2702px;top:45px;width:17px;height:2px;background:#fff;"></div>
<svg style="left:2772px;top:38px;" width="22" height="20" viewBox="0 0 22 20"><rect x="2.5" y="5.5" width="11" height="12" rx="2" stroke="#fff" stroke-width="1.6" fill="none"/><path d="M6 4 Q6 2.5 7.5 2.5 L16 2.5 Q18.5 2.5 18.5 5 L18.5 13 Q18.5 14.5 17 14.5" stroke="#fff" stroke-width="1.6" fill="none"/></svg>
<svg style="left:2845px;top:37px;" width="20" height="20" viewBox="0 0 20 20"><path d="M2 2 L18 18 M18 2 L2 18" stroke="#fff" stroke-width="1.7"/></svg>
<div class="r" style="left:2621px;top:87px;width:135px;height:36px;background:#262626;border:1.3px solid #666;border-radius:6px;box-sizing:border-box;"></div>
<svg style="left:2628px;top:95px;" width="22" height="22" viewBox="0 0 22 22"><path d="M3 3 L19 3 L19 14 L10 14 L6 18.5 L6 14 L3 14 Z" stroke="#fff" stroke-width="1.6" fill="none" stroke-linejoin="round"/></svg>
<div class="t" style="top:96.6px;font-size:18.2px;color:#ffffff;letter-spacing:0.2px;left:2653.0px;">Comments</div>
<div class="r" style="left:2768px;top:87px;width:105px;height:36px;background:#3aa865;border-radius:6px;"></div>
<svg style="left:2774px;top:94px;" width="24" height="24" viewBox="0 0 24 24"><path d="M3 11 L3 20 L18 20 L18 16" stroke="#111" stroke-width="1.6" fill="none"/><path d="M7 16 Q8 8 16 8 L16 4 L22 10 L16 15.5 L16 12 Q10 12 7 16 Z" stroke="#111" stroke-width="1.6" fill="none" stroke-linejoin="round"/></svg>
<div class="t" style="top:96.8px;font-size:18px;color:#111;left:2799.0px;">Share</div>
<svg style="left:2855px;top:99px;" width="14" height="10" viewBox="0 0 14 10"><path d="M2 2.5 L7 7.5 L12 2.5" stroke="#111" stroke-width="1.6" fill="none"/></svg>
<div class="t" style="top:98.1px;font-size:18.2px;color:#ffffff;letter-spacing:0.4px;left:42.3px;">File</div>
<div class="t" style="top:98.1px;font-size:18.2px;color:#ffffff;font-weight:700;letter-spacing:0.2px;left:111.3px;">Home</div>
<div class="t" style="top:98.1px;font-size:18.2px;color:#ffffff;letter-spacing:0.4px;left:198.6px;">Insert</div>
<div class="t" style="top:98.1px;font-size:18.2px;color:#ffffff;letter-spacing:0.4px;left:277.3px;">Draw</div>
<div class="t" style="top:98.1px;font-size:18.2px;color:#ffffff;letter-spacing:0.4px;left:353.8px;">Page Layout</div>
<div class="t" style="top:98.1px;font-size:18.2px;color:#ffffff;letter-spacing:0.4px;left:491.0px;">Formulas</div>
<div class="t" style="top:98.1px;font-size:18.2px;color:#ffffff;letter-spacing:0.4px;left:600.7px;">Data</div>
<div class="t" style="top:98.1px;font-size:18.2px;color:#ffffff;letter-spacing:0.4px;left:671.0px;">Review</div>
<div class="t" style="top:98.1px;font-size:18.2px;color:#ffffff;letter-spacing:0.4px;left:762.0px;">View</div>
<div class="t" style="top:98.1px;font-size:18.2px;color:#ffffff;letter-spacing:1.1px;left:834.0px;">Automate</div>
<div class="t" style="top:98.1px;font-size:18.2px;color:#ffffff;letter-spacing:0.4px;left:950.5px;">Help</div>
<div class="r" style="left:111px;top:120px;width:58px;height:3.5px;background:#6fbf8e;border-radius:2px;"></div>
<div class="r" style="left:23px;top:128px;width:2856px;height:150px;background:#292929;border-radius:10px;"></div>
<svg style="left:50px;top:138px;" width="50" height="50" viewBox="0 0 50 50"><path d="M13 14 L6 14 L6 45 L24 45" stroke="#f0a834" stroke-width="3.2" fill="none"/>
<path d="M28 14 L33 14 L33 22" stroke="#f0a834" stroke-width="3.2" fill="none"/>
<path d="M14 10 L19 10 Q19 5 23 5 Q27 5 27 10 L32 10 L32 15 L14 15 Z" stroke="#ccc" stroke-width="1.6" fill="#292929"/>
<rect x="25.5" y="21.5" width="19" height="25" stroke="#ddd" stroke-width="1.7" fill="#292929"/></svg>
<div class="t" style="top:194.8px;font-size:18px;color:#ffffff;left:-528.0px;width:1200px;text-align:center;">Paste</div>
<svg style="left:66.5px;top:223.75px;" width="11" height="8.5" viewBox="0 0 11 8.5"><path d="M1 1.5 L5.5 6.0 L10 1.5" stroke="#e6e6e6" stroke-width="1.8" fill="none"/></svg>
<svg style="left:112px;top:138px;" width="26" height="28" viewBox="0 0 26 28"><path d="M9 2 L15 20 M17 2 L11 20" stroke="#ccc" stroke-width="1.4"/><circle cx="8" cy="23" r="3" stroke="#4aa3e8" stroke-width="1.8" fill="none"/><circle cx="17" cy="23" r="3" stroke="#4aa3e8" stroke-width="1.8" fill="none"/></svg>
<div class="t" style="top:143.9px;font-size:17.8px;color:#ffffff;left:142.0px;">Cut</div>
<svg style="left:111px;top:178px;" width="28" height="28" viewBox="0 0 28 28"><path d="M12 21 L3 21 L3 2 L14 2 L17 5" stroke="#ccc" stroke-width="1.5" fill="none"/><path d="M9.5 7 L19 7 L24 12 L24 25 L9.5 25 Z" stroke="#ccc" stroke-width="1.5" fill="#292929"/><path d="M19 7 L19 12 L24 12" stroke="#ccc" stroke-width="1.3" fill="none"/><path d="M13 17 L20 17 M13 20.5 L20 20.5" stroke="#ccc" stroke-width="1.3"/></svg>
<div class="t" style="top:182.9px;font-size:17.8px;color:#ffffff;left:142.0px;">Copy</div>
<svg style="left:210.5px;top:188.75px;" width="11" height="8.5" viewBox="0 0 11 8.5"><path d="M1 1.5 L5.5 6.0 L10 1.5" stroke="#e6e6e6" stroke-width="1.8" fill="none"/></svg>
<svg style="left:111px;top:216px;" width="28" height="26" viewBox="0 0 28 26"><path d="M2 12 L14 8 L19 14 L13 24 Z" stroke="#f0c060" stroke-width="1.5" fill="none"/><path d="M5 15 L15 11 L13 24 Z" fill="#e8a838"/><path d="M14 8 L21 2 Q24 1 25 3 L19 14" stroke="#ccc" stroke-width="1.6" fill="none"/></svg>
<div class="t" style="top:221.6px;font-size:17.6px;color:#ffffff;left:142.0px;">Format Painter</div>
<div class="t" style="top:254.0px;font-size:16.5px;color:#ffffff;left:-457.0px;width:1200px;text-align:center;">Clipboard</div>
<svg style="left:265px;top:257px;" width="13" height="13" viewBox="0 0 13 13"><path d="M1 1 L12 1 L12 12 M1 1 L1 12 L7 12" stroke="#fff" stroke-width="0" fill="none"/><path d="M1.5 7 L1.5 1.5 L7 1.5 M4 4 L11.5 11.5 M11.5 5.5 L11.5 11.5 L5.5 11.5" stroke="#ddd" stroke-width="1.3" fill="none"/></svg>
<div class="r" style="left:282px;top:135px;width:1px;height:133px;background:#5a5a5a;"></div>
<div class="r" style="left:295px;top:146px;width:181px;height:36px;background:transparent;border:1.3px solid #6a6a6a;border-radius:6px;box-sizing:border-box;"></div>
<div class="t" style="top:155.8px;font-size:18px;color:#ffffff;left:298.5px;">Tahoma</div>
<svg style="left:461.5px;top:161.25px;" width="13" height="9.5" viewBox="0 0 13 9.5"><path d="M1 1.5 L6.5 7.0 L12 1.5" stroke="#e6e6e6" stroke-width="1.8" fill="none"/></svg>
<div class="r" style="left:479px;top:146px;width:65px;height:36px;background:transparent;border:1.3px solid #6a6a6a;border-radius:6px;box-sizing:border-box;"></div>
<div class="t" style="top:155.8px;font-size:18px;color:#ffffff;left:483.0px;">8</div>
<svg style="left:529.5px;top:161.25px;" width="13" height="9.5" viewBox="0 0 13 9.5"><path d="M1 1.5 L6.5 7.0 L12 1.5" stroke="#e6e6e6" stroke-width="1.8" fill="none"/></svg>
<svg style="left:550px;top:148px;" width="30" height="28" viewBox="0 0 30 28"><path d="M3 24 L11 4 L19 24 M6 17 L16 17" stroke="#ccc" stroke-width="1.7" fill="none"/><path d="M19 8 L22.5 4.5 L26 8" stroke="#4aa3e8" stroke-width="1.6" fill="none"/></svg>
<svg style="left:592px;top:148px;" width="30" height="28" viewBox="0 0 30 28"><path d="M3 24 L10.5 6 L18 24 M5.8 17 L15.2 17" stroke="#ccc" stroke-width="1.7" fill="none"/><path d="M20 3.5 L23.5 7 L27 3.5" stroke="#4aa3e8" stroke-width="1.6" fill="none"/></svg>
<div class="t" style="top:201.4px;font-size:19px;color:#ddd;font-weight:700;left:-287.0px;width:1200px;text-align:center;">B</div>
<div class="t" style="top:201.4px;font-size:19px;color:#ddd;left:-249.0px;width:1200px;text-align:center;font-style:italic;font-family:"Liberation Serif",serif;">I</div>
<div class="t" style="top:202.3px;font-size:18px;color:#ddd;left:-210.0px;width:1200px;text-align:center;">U</div>
<div class="r" style="left:383px;top:219px;width:14px;height:2px;background:#ddd;"></div>
<svg style="left:413.5px;top:208.75px;" width="11" height="8.5" viewBox="0 0 11 8.5"><path d="M1 1.5 L5.5 6.0 L10 1.5" stroke="#e6e6e6" stroke-width="1.8" fill="none"/></svg>
<div class="r" style="left:434px;top:194px;width:1px;height:36px;background:#5a5a5a;"></div>
<svg style="left:443px;top:199px;" width="26" height="26" viewBox="0 0 26 26"><path d="M1.5 1.5 L23.5 1.5 L23.5 21 M1.5 1.5 L1.5 21 M12.5 1.5 L12.5 21 M1.5 11.5 L23.5 11.5" stroke="#ccc" stroke-width="1.4" stroke-dasharray="1.6 1.6" fill="none"/><path d="M1 23.5 L24 23.5" stroke="#eee" stroke-width="1.8"/></svg>
<svg style="left:479.5px;top:208.75px;" width="11" height="8.5" viewBox="0 0 11 8.5"><path d="M1 1.5 L5.5 6.0 L10 1.5" stroke="#e6e6e6" stroke-width="1.8" fill="none"/></svg>
<div class="r" style="left:499px;top:194px;width:1px;height:36px;background:#5a5a5a;"></div>
<svg style="left:508px;top:199px;" width="28" height="27" viewBox="0 0 28 27"><path d="M6 12 L13 5 L20 12 L13 19 Z" stroke="#ddd" stroke-width="1.5" fill="none"/><path d="M13 5 L13 1" stroke="#ddd" stroke-width="1.5"/><path d="M21 8 Q25 11 23 16" stroke="#4aa3e8" stroke-width="2" fill="none"/></svg>
<div class="r" style="left:509px;top:218px;width:24px;height:6px;background:#f5f000;"></div>
<svg style="left:544.5px;top:208.75px;" width="11" height="8.5" viewBox="0 0 11 8.5"><path d="M1 1.5 L5.5 6.0 L10 1.5" stroke="#e6e6e6" stroke-width="1.8" fill="none"/></svg>
<div class="t" style="top:199.8px;font-size:18px;color:#ddd;left:-16.5px;width:1200px;text-align:center;">A</div>
<div class="r" style="left:570px;top:218px;width:24px;height:6px;background:#e81010;"></div>
<svg style="left:605.5px;top:208.75px;" width="11" height="8.5" viewBox="0 0 11 8.5"><path d="M1 1.5 L5.5 6.0 L10 1.5" stroke="#e6e6e6" stroke-width="1.8" fill="none"/></svg>
<div class="t" style="top:254.0px;font-size:16.5px;color:#ffffff;left:-154.0px;width:1200px;text-align:center;">Font</div>
<svg style="left:616px;top:257px;" width="13" height="13" viewBox="0 0 13 13"><path d="M1 1 L12 1 L12 12 M1 1 L1 12 L7 12" stroke="#fff" stroke-width="0" fill="none"/><path d="M1.5 7 L1.5 1.5 L7 1.5 M4 4 L11.5 11.5 M11.5 5.5 L11.5 11.5 L5.5 11.5" stroke="#ddd" stroke-width="1.3" fill="none"/></svg>
<div class="r" style="left:633px;top:135px;width:1px;height:133px;background:#5a5a5a;"></div>
<svg style="left:653px;top:152px;" width="30" height="30" viewBox="0 0 30 30"><rect x="0" y="0" width="22" height="1.8" fill="#ddd"/><rect x="4" y="6" width="14" height="1.8" fill="#ddd"/><rect x="0" y="12" width="22" height="1.8" fill="#ddd"/></svg>
<div class="r" style="left:685px;top:146px;width:36px;height:36px;background:#3a3a3a;border:1.3px solid #6a6a6a;border-radius:6px;box-sizing:border-box;"></div>
<svg style="left:692px;top:157px;" width="30" height="30" viewBox="0 0 30 30"><rect x="0" y="0" width="22" height="1.8" fill="#ddd"/><rect x="4" y="6" width="14" height="1.8" fill="#ddd"/><rect x="0" y="12" width="22" height="1.8" fill="#ddd"/></svg>
<svg style="left:731px;top:162px;" width="30" height="30" viewBox="0 0 30 30"><rect x="0" y="0" width="22" height="1.8" fill="#ddd"/><rect x="4" y="6" width="14" height="1.8" fill="#ddd"/><rect x="0" y="12" width="22" height="1.8" fill="#ddd"/></svg>
<div class="r" style="left:763px;top:146px;width:1px;height:36px;background:#5a5a5a;"></div>
<svg style="left:770px;top:148px;" width="32" height="30" viewBox="0 0 32 30"><text x="2" y="16" font-size="13" fill="#ccc" font-family="Liberation Sans" transform="rotate(-45 10 12)">ab</text><path d="M9 26 L25 10 M18 10 L25 10 L25 17" stroke="#4aa3e8" stroke-width="1.8" fill="none"/></svg>
<svg style="left:805.5px;top:161.75px;" width="11" height="8.5" viewBox="0 0 11 8.5"><path d="M1 1.5 L5.5 6.0 L10 1.5" stroke="#e6e6e6" stroke-width="1.8" fill="none"/></svg>
<div class="r" style="left:851px;top:144px;width:1px;height:94px;background:#5a5a5a;"></div>
<svg style="left:653px;top:201px;" width="30" height="30" viewBox="0 0 30 30"><rect x="0" y="0" width="22" height="1.8" fill="#ddd"/><rect x="0" y="6" width="14" height="1.8" fill="#ddd"/><rect x="0" y="12" width="22" height="1.8" fill="#ddd"/><rect x="0" y="18" width="14" height="1.8" fill="#ddd"/></svg>
<svg style="left:692px;top:201px;" width="30" height="30" viewBox="0 0 30 30"><rect x="0" y="0" width="22" height="1.8" fill="#ddd"/><rect x="4" y="6" width="14" height="1.8" fill="#ddd"/><rect x="0" y="12" width="22" height="1.8" fill="#ddd"/><rect x="4" y="18" width="14" height="1.8" fill="#ddd"/></svg>
<svg style="left:731px;top:201px;" width="30" height="30" viewBox="0 0 30 30"><rect x="0" y="0" width="22" height="1.8" fill="#ddd"/><rect x="8" y="6" width="14" height="1.8" fill="#ddd"/><rect x="0" y="12" width="22" height="1.8" fill="#ddd"/><rect x="8" y="18" width="14" height="1.8" fill="#ddd"/></svg>
<div class="r" style="left:763px;top:194px;width:1px;height:36px;background:#5a5a5a;"></div>
<svg style="left:773px;top:199px;" width="26" height="26" viewBox="0 0 26 26"><rect x="0" y="0" width="22" height="1.8" fill="#ddd"/><rect x="9" y="6" width="13" height="1.8" fill="#ddd"/><rect x="9" y="12" width="13" height="1.8" fill="#ddd"/><rect x="0" y="18" width="22" height="1.8" fill="#ddd"/><path d="M7 9.5 L1 9.5 M4 6.5 L1 9.5 L4 12.5" stroke="#4aa3e8" stroke-width="1.6" fill="none"/></svg>
<svg style="left:812px;top:199px;" width="26" height="26" viewBox="0 0 26 26"><rect x="0" y="0" width="22" height="1.8" fill="#ddd"/><rect x="9" y="6" width="13" height="1.8" fill="#ddd"/><rect x="9" y="12" width="13" height="1.8" fill="#ddd"/><rect x="0" y="18" width="22" height="1.8" fill="#ddd"/><path d="M0 9.5 L7 9.5 M4 6.5 L7 9.5 L4 12.5" stroke="#4aa3e8" stroke-width="1.6" fill="none"/></svg>
<svg style="left:868px;top:151px;" width="28" height="28" viewBox="0 0 28 28"><text x="0" y="11" font-size="12.5" fill="#ccc" font-family="Liberation Sans">ab</text><text x="0" y="23" font-size="12.5" fill="#ccc" font-family="Liberation Sans">c</text><path d="M21 12 Q25 17 20 20 L10 20 M13.5 16.5 L10 20 L13.5 23.5" stroke="#4aa3e8" stroke-width="1.7" fill="none"/></svg>
<div class="t" style="top:154.8px;font-size:18px;color:#ffffff;left:897.0px;">Wrap Text</div>
<svg style="left:865px;top:199px;" width="26" height="26" viewBox="0 0 26 26"><rect x="1" y="1" width="23" height="22" stroke="#ccc" stroke-width="1.5" fill="none"/><path d="M1 6 L24 6 M1 18 L24 18 M12.5 1 L12.5 6 M12.5 18 L12.5 23" stroke="#ccc" stroke-width="1.3"/><rect x="1.5" y="6.5" width="22" height="11" fill="none" stroke="#4aa3e8" stroke-width="1.5"/><path d="M5 12 L20 12 M8 9 L5 12 L8 15 M17 9 L20 12 L17 15" stroke="#ddd" stroke-width="1.4" fill="none"/></svg>
<div class="t" style="top:202.8px;font-size:18px;color:#ffffff;left:897.0px;">Merge &amp; Center</div>
<svg style="left:1049.5px;top:209.75px;" width="11" height="8.5" viewBox="0 0 11 8.5"><path d="M1 1.5 L5.5 6.0 L10 1.5" stroke="#e6e6e6" stroke-width="1.8" fill="none"/></svg>
<div class="t" style="top:254.0px;font-size:16.5px;color:#ffffff;left:246.0px;width:1200px;text-align:center;">Alignment</div>
<svg style="left:1066px;top:257px;" width="13" height="13" viewBox="0 0 13 13"><path d="M1 1 L12 1 L12 12 M1 1 L1 12 L7 12" stroke="#fff" stroke-width="0" fill="none"/><path d="M1.5 7 L1.5 1.5 L7 1.5 M4 4 L11.5 11.5 M11.5 5.5 L11.5 11.5 L5.5 11.5" stroke="#ddd" stroke-width="1.3" fill="none"/></svg>
<div class="r" style="left:1083px;top:135px;width:1px;height:133px;background:#5a5a5a;"></div>
<div class="r" style="left:1096px;top:146px;width:218px;height:36px;background:transparent;border:1.3px solid #6a6a6a;border-radius:6px;box-sizing:border-box;"></div>
<div class="t" style="top:155.8px;font-size:18px;color:#ffffff;left:1099.5px;">General</div>
<svg style="left:1299.5px;top:161.25px;" width="13" height="9.5" viewBox="0 0 13 9.5"><path d="M1 1.5 L6.5 7.0 L12 1.5" stroke="#e6e6e6" stroke-width="1.8" fill="none"/></svg>
<div class="t" style="top:202.4px;font-size:22px;color:#ccc;left:513.0px;width:1200px;text-align:center;">$</div>
<svg style="left:1137.5px;top:208.75px;" width="11" height="8.5" viewBox="0 0 11 8.5"><path d="M1 1.5 L5.5 6.0 L10 1.5" stroke="#e6e6e6" stroke-width="1.8" fill="none"/></svg>
<div class="t" style="top:202.4px;font-size:22px;color:#ccc;left:575.0px;width:1200px;text-align:center;">%</div>
<svg style="left:1206px;top:200px;" width="18" height="24" viewBox="0 0 18 24"><circle cx="9.2" cy="8.2" r="5.2" fill="#ccc"/><path d="M14.2 8.5 Q14.5 17 5 21.8 L4 20 Q9.5 16.5 9.8 12 Z" fill="#ccc"/></svg>
<div class="r" style="left:1235px;top:194px;width:1px;height:36px;background:#5a5a5a;"></div>
<svg style="left:1243px;top:199px;" width="28" height="28" viewBox="0 0 28 28"><path d="M2.5 7.6 L16 7.6 M7 3.2 L2.5 7.6 L7 12" stroke="#4aa3e8" stroke-width="1.5" fill="none"/><text x="13.5" y="12.3" font-size="14" fill="#ddd" font-family="Liberation Sans" textLength="11.5" lengthAdjust="spacingAndGlyphs">.0</text><text x="5.5" y="24.3" font-size="14" fill="#ddd" font-family="Liberation Sans" textLength="19.5" lengthAdjust="spacingAndGlyphs">.00</text></svg>
<svg style="left:1283px;top:199px;" width="28" height="28" viewBox="0 0 28 28"><text x="4.5" y="12.3" font-size="14" fill="#ddd" font-family="Liberation Sans" textLength="19.5" lengthAdjust="spacingAndGlyphs">.00</text><path d="M1 18 L14 18 M9.5 13.6 L14 18 L9.5 22.4" stroke="#4aa3e8" stroke-width="1.5" fill="none"/><text x="12.5" y="24.3" font-size="14" fill="#ddd" font-family="Liberation Sans" textLength="11.5" lengthAdjust="spacingAndGlyphs">.0</text></svg>
<div class="t" style="top:254.0px;font-size:16.5px;color:#ffffff;left:592.0px;width:1200px;text-align:center;">Number</div>
<svg style="left:1308px;top:257px;" width="13" height="13" viewBox="0 0 13 13"><path d="M1 1 L12 1 L12 12 M1 1 L1 12 L7 12" stroke="#fff" stroke-width="0" fill="none"/><path d="M1.5 7 L1.5 1.5 L7 1.5 M4 4 L11.5 11.5 M11.5 5.5 L11.5 11.5 L5.5 11.5" stroke="#ddd" stroke-width="1.3" fill="none"/></svg>
<div class="r" style="left:1325px;top:135px;width:1px;height:133px;background:#5a5a5a;"></div>
<svg style="left:1343px;top:143px;" width="52" height="38" viewBox="0 0 52 38"><rect x="3.5" y="1.5" width="42" height="32" stroke="#ccc" stroke-width="1.6" fill="none"/><path d="M3.5 12 L45.5 12 M3.5 23 L45.5 23 M17.5 1.5 L17.5 33.5 M31.5 1.5 L31.5 33.5" stroke="#ccc" stroke-width="1.5"/><rect x="18" y="13" width="30" height="10" fill="#1a7fd4"/><path d="M18 18 L2 18 M8 12 L2 18 L8 24" stroke="#4aa3e8" stroke-width="1.8" fill="none"/></svg>
<div class="t" style="top:194.5px;font-size:18px;color:#ffffff;left:769.0px;width:1200px;text-align:center;">Insert</div>
<svg style="left:1363.5px;top:222.75px;" width="11" height="8.5" viewBox="0 0 11 8.5"><path d="M1 1.5 L5.5 6.0 L10 1.5" stroke="#e6e6e6" stroke-width="1.8" fill="none"/></svg>
<svg style="left:1410px;top:143px;" width="52" height="38" viewBox="0 0 52 38"><rect x="3.5" y="1.5" width="42" height="32" stroke="#ccc" stroke-width="1.6" fill="none"/><path d="M3.5 12 L45.5 12 M3.5 23 L45.5 23 M17.5 1.5 L17.5 33.5 M31.5 1.5 L31.5 33.5" stroke="#ccc" stroke-width="1.5"/><rect x="10" y="13" width="26" height="10" fill="#1a7fd4"/><path d="M30 10 L42 27 M42 10 L30 27" stroke="#e04848" stroke-width="1.8"/></svg>
<div class="t" style="top:194.5px;font-size:18px;color:#ffffff;left:834.0px;width:1200px;text-align:center;">Delete</div>
<svg style="left:1428.5px;top:222.75px;" width="11" height="8.5" viewBox="0 0 11 8.5"><path d="M1 1.5 L5.5 6.0 L10 1.5" stroke="#e6e6e6" stroke-width="1.8" fill="none"/></svg>
<svg style="left:1476px;top:136px;" width="50" height="45" viewBox="0 0 50 45"><path d="M10 3 L33 3 M10 1 L10 5 M33 1 L33 5" stroke="#4aa3e8" stroke-width="1.5"/><rect x="2.5" y="8.5" width="41" height="33" stroke="#ccc" stroke-width="1.6" fill="none"/><path d="M2.5 19 L43.5 19 M2.5 30 L43.5 30 M12.5 8.5 L12.5 41.5 M33.5 8.5 L33.5 41.5" stroke="#ccc" stroke-width="1.5"/><rect x="13" y="19.5" width="20" height="10" fill="#1a7fd4"/></svg>
<div class="t" style="top:192.6px;font-size:18px;color:#ffffff;left:900.0px;width:1200px;text-align:center;">Format</div>
<svg style="left:1494.5px;top:221.75px;" width="11" height="8.5" viewBox="0 0 11 8.5"><path d="M1 1.5 L5.5 6.0 L10 1.5" stroke="#e6e6e6" stroke-width="1.8" fill="none"/></svg>
<div class="t" style="top:254.0px;font-size:16.5px;color:#ffffff;left:834.0px;width:1200px;text-align:center;">Cells</div>
<div class="r" style="left:1544px;top:135px;width:1px;height:133px;background:#5a5a5a;"></div>
<svg style="left:1564px;top:139px;" width="24" height="26" viewBox="0 0 24 26"><path d="M19 3 L3 3 L11 12.5 L3 22 L19 22" stroke="#ccc" stroke-width="1.7" fill="none"/></svg>
<div class="t" style="top:143.8px;font-size:18px;color:#ffffff;left:1593.0px;">AutoSum</div>
<svg style="left:1694.5px;top:149.75px;" width="11" height="8.5" viewBox="0 0 11 8.5"><path d="M1 1.5 L5.5 6.0 L10 1.5" stroke="#e6e6e6" stroke-width="1.8" fill="none"/></svg>
<svg style="left:1561px;top:179px;" width="28" height="25" viewBox="0 0 28 25"><rect x="2" y="2" width="24" height="20" stroke="#ccc" stroke-width="1.5" fill="none"/><path d="M2 5 L26 5" stroke="#ccc" stroke-width="1.2"/><path d="M14 8 L14 18 M9.5 14 L14 18.5 L18.5 14" stroke="#4aa3e8" stroke-width="1.7" fill="none"/></svg>
<div class="t" style="top:181.8px;font-size:18px;color:#ffffff;left:1593.0px;">Fill</div>
<svg style="left:1619.5px;top:187.75px;" width="11" height="8.5" viewBox="0 0 11 8.5"><path d="M1 1.5 L5.5 6.0 L10 1.5" stroke="#e6e6e6" stroke-width="1.8" fill="none"/></svg>
<svg style="left:1561px;top:217px;" width="28" height="28" viewBox="0 0 28 28"><path d="M3 15 L14 4 L25 15 L14 26 Z" stroke="#c060d8" stroke-width="1.7" fill="none"/><path d="M3 15 L8.5 9.5 L19.5 20.5 L14 26 Z" fill="#b552cf"/></svg>
<div class="t" style="top:221.6px;font-size:18px;color:#ffffff;left:1593.0px;">Clear</div>
<svg style="left:1637.5px;top:226.75px;" width="11" height="8.5" viewBox="0 0 11 8.5"><path d="M1 1.5 L5.5 6.0 L10 1.5" stroke="#e6e6e6" stroke-width="1.8" fill="none"/></svg>
<svg style="left:1726px;top:139px;" width="52" height="44" viewBox="0 0 52 44"><text x="2" y="20" font-size="21" fill="#4aa3e8" font-family="Liberation Sans">A</text><text x="3" y="41" font-size="21" fill="#ccc" font-family="Liberation Sans">Z</text><path d="M22 11 L46 11 L37 22 L37 31 L31 31 L31 22 Z" stroke="#ccc" stroke-width="1.7" fill="none" stroke-linejoin="round"/></svg>
<div class="t" style="top:192.6px;font-size:18px;color:#ffffff;left:1151.0px;width:1200px;text-align:center;">Sort &amp;</div>
<div class="t" style="top:216.5px;font-size:18px;color:#ffffff;left:1143.0px;width:1200px;text-align:center;">Filter</div>
<svg style="left:1767.5px;top:221.75px;" width="11" height="8.5" viewBox="0 0 11 8.5"><path d="M1 1.5 L5.5 6.0 L10 1.5" stroke="#e6e6e6" stroke-width="1.8" fill="none"/></svg>
<svg style="left:1796px;top:139px;" width="50" height="50" viewBox="0 0 50 50"><circle cx="30" cy="17" r="15.5" stroke="#ccc" stroke-width="1.7" fill="none"/><path d="M19 28 L3 45" stroke="#ccc" stroke-width="1.8"/></svg>
<div class="t" style="top:192.6px;font-size:18px;color:#ffffff;left:1221.0px;width:1200px;text-align:center;">Find &amp;</div>
<div class="t" style="top:216.5px;font-size:18px;color:#ffffff;left:1213.0px;width:1200px;text-align:center;">Select</div>
<svg style="left:1841.5px;top:221.75px;" width="11" height="8.5" viewBox="0 0 11 8.5"><path d="M1 1.5 L5.5 6.0 L10 1.5" stroke="#e6e6e6" stroke-width="1.8" fill="none"/></svg>
<div class="t" style="top:254.0px;font-size:16.5px;color:#ffffff;left:1106.0px;width:1200px;text-align:center;">Editing</div>
<div class="r" style="left:1868px;top:135px;width:1px;height:133px;background:#5a5a5a;"></div>
<svg style="left:1893px;top:139px;" width="46" height="46" viewBox="0 0 46 46"><rect x="2.5" y="2.5" width="41" height="41" stroke="#d4582a" stroke-width="2.6" fill="none"/><rect x="9" y="9" width="12" height="12" stroke="#d4582a" stroke-width="2" fill="none"/><rect x="25" y="9" width="12" height="12" stroke="#d4582a" stroke-width="2" fill="none"/><rect x="9" y="25" width="12" height="12" stroke="#d4582a" stroke-width="2" fill="none"/><rect x="25" y="25" width="12" height="12" stroke="#d4582a" stroke-width="2" fill="none"/></svg>
<div class="t" style="top:192.6px;font-size:18px;color:#ffffff;left:1316.0px;width:1200px;text-align:center;">Add-ins</div>
<div class="t" style="top:254.0px;font-size:16.5px;color:#ffffff;left:1315.0px;width:1200px;text-align:center;">Add-ins</div>
<div class="r" style="left:1963px;top:135px;width:1px;height:133px;background:#5a5a5a;"></div>
<svg style="left:1987px;top:139px;" width="46" height="46" viewBox="0 0 46 46"><rect x="2" y="2" width="41" height="41" stroke="#ccc" stroke-width="1.6" fill="none"/><rect x="2" y="2" width="41" height="5" fill="#888"/><path d="M2 16 L43 16 M2 25 L43 25 M2 34 L43 34 M12 2 L12 43 M22 2 L22 43 M32 2 L32 43" stroke="#777" stroke-width="1.2"/><circle cx="21" cy="19" r="12" stroke="#ccc" stroke-width="1.8" fill="#292929"/><rect x="15" y="18" width="3" height="7" fill="#999"/><rect x="19.5" y="12" width="3" height="13" fill="#ccc"/><rect x="24" y="15" width="3" height="10" fill="#4aa3e8"/><path d="M30 28 L42 41" stroke="#ccc" stroke-width="2"/></svg>
<div class="t" style="top:192.6px;font-size:18px;color:#ffffff;left:1410.5px;width:1200px;text-align:center;">Analyze</div>
<div class="t" style="top:216.5px;font-size:18px;color:#ffffff;left:1411.0px;width:1200px;text-align:center;">Data</div>
<div class="r" style="left:2056px;top:135px;width:1px;height:133px;background:#5a5a5a;"></div>
<svg style="left:2155px;top:142px;" width="114" height="114" viewBox="0 0 114 114"><circle cx="57" cy="57" r="56" fill="#fff"/><rect x="26.5" y="31" width="61" height="52.5" fill="#5b5ff0"/><rect x="34" y="39" width="19" height="14.5" fill="#fff"/><rect x="60" y="39" width="19.5" height="14.5" fill="#fff"/><rect x="34" y="61" width="19" height="14.5" fill="#fff"/><rect x="60" y="61" width="19.5" height="14.5" fill="#fff"/></svg>
<div class="t" style="top:158.2px;font-size:47px;color:#ffffff;font-weight:700;letter-spacing:0.6px;-webkit-text-stroke:1.3px #ffffff;left:2293.5px;">FINM</div>
<svg style="left:2412px;top:160px;" width="40" height="40" viewBox="0 0 40 40"><circle cx="19.8" cy="21.3" r="13.35" stroke="#fff" stroke-width="8.9" fill="none"/><rect x="11.5" y="-6" width="16.5" height="18" fill="#292929"/><rect x="15.5" y="-5" width="8.5" height="27" rx="4.2" fill="#fff"/></svg>
<div class="t" style="top:158.2px;font-size:47px;color:#ffffff;font-weight:700;letter-spacing:-0.3px;-webkit-text-stroke:1.3px #ffffff;left:2451.5px;transform:scaleX(0.92);transform-origin:0 0;">DELSLAB</div>
<div class="t" style="top:208.2px;font-size:34px;color:#ffffff;letter-spacing:25.2px;-webkit-text-stroke:0.4px #ffffff;left:2296.0px;">Templates</div>
<svg style="left:2850px;top:251px;" width="16" height="12" viewBox="0 0 16 12"><path d="M2 2.5 L8 8.5 L14 2.5" stroke="#ddd" stroke-width="1.6" fill="none"/></svg>
<div class="r" style="left:11px;top:278px;width:2849px;height:27px;background:#0a0a0a;"></div>
<svg style="left:11px;top:278px;" width="42" height="27" viewBox="0 0 42 27"><path d="M39 4 L39 24 L19 24 Z" fill="#7a7a7a"/></svg>
<div class="r" style="left:53px;top:278px;width:35px;height:27px;background:#6b6b6b;"></div>
<div class="t" style="top:281.4px;font-size:22px;color:#ffffff;left:-529.5px;width:1200px;text-align:center;">A</div>
<div class="r" style="left:88px;top:278px;width:1px;height:27px;background:#6a6a6a;"></div>
<div class="t" style="top:281.4px;font-size:22px;color:#ffffff;left:-487.0px;width:1200px;text-align:center;">B</div>
<div class="r" style="left:138px;top:278px;width:1px;height:27px;background:#6a6a6a;"></div>
<div class="t" style="top:281.4px;font-size:22px;color:#ffffff;left:-327.5px;width:1200px;text-align:center;">C</div>
<div class="r" style="left:407px;top:278px;width:1px;height:27px;background:#6a6a6a;"></div>
<div class="t" style="top:281.4px;font-size:22px;color:#ffffff;left:-58.0px;width:1200px;text-align:center;">D</div>
<div class="r" style="left:677px;top:278px;width:1px;height:27px;background:#6a6a6a;"></div>
<div class="t" style="top:281.4px;font-size:22px;color:#ffffff;left:212.0px;width:1200px;text-align:center;">E</div>
<div class="r" style="left:947px;top:278px;width:1px;height:27px;background:#6a6a6a;"></div>
<div class="t" style="top:281.4px;font-size:22px;color:#ffffff;left:450.0px;width:1200px;text-align:center;">F</div>
<div class="r" style="left:1153px;top:278px;width:1px;height:27px;background:#6a6a6a;"></div>
<div class="t" style="top:281.4px;font-size:22px;color:#ffffff;left:656.0px;width:1200px;text-align:center;">G</div>
<div class="r" style="left:1359px;top:278px;width:1px;height:27px;background:#6a6a6a;"></div>
<div class="t" style="top:281.4px;font-size:22px;color:#ffffff;left:862.5px;width:1200px;text-align:center;">H</div>
<div class="r" style="left:1566px;top:278px;width:1px;height:27px;background:#6a6a6a;"></div>
<div class="t" style="top:281.4px;font-size:22px;color:#ffffff;left:1069.5px;width:1200px;text-align:center;">I</div>
<div class="r" style="left:1773px;top:278px;width:1px;height:27px;background:#6a6a6a;"></div>
<div class="t" style="top:281.4px;font-size:22px;color:#ffffff;left:1257.5px;width:1200px;text-align:center;">J</div>
<div class="r" style="left:1942px;top:278px;width:1px;height:27px;background:#6a6a6a;"></div>
<div class="t" style="top:281.4px;font-size:22px;color:#ffffff;left:1426.5px;width:1200px;text-align:center;">K</div>
<div class="r" style="left:2111px;top:278px;width:1px;height:27px;background:#6a6a6a;"></div>
<div class="t" style="top:281.4px;font-size:22px;color:#ffffff;left:1595.5px;width:1200px;text-align:center;">L</div>
<div class="r" style="left:2280px;top:278px;width:1px;height:27px;background:#6a6a6a;"></div>
<div class="t" style="top:281.4px;font-size:22px;color:#ffffff;left:1764.5px;width:1200px;text-align:center;">M</div>
<div class="r" style="left:2449px;top:278px;width:1px;height:27px;background:#6a6a6a;"></div>
<div class="t" style="top:281.4px;font-size:22px;color:#ffffff;left:1933.5px;width:1200px;text-align:center;">N</div>
<div class="r" style="left:2618px;top:278px;width:1px;height:27px;background:#6a6a6a;"></div>
<div class="t" style="top:281.4px;font-size:22px;color:#ffffff;left:2102.5px;width:1200px;text-align:center;">O</div>
<div class="r" style="left:2787px;top:278px;width:1px;height:27px;background:#6a6a6a;"></div>
<div class="t" style="top:281.4px;font-size:22px;color:#ffffff;left:2271.5px;width:1200px;text-align:center;">P</div>
<div class="r" style="left:53px;top:305px;width:2807px;height:1px;background:#a8a8a8;"></div>
<div class="r" style="left:53px;top:303px;width:35px;height:3px;background:#1f7a45;"></div>
<div class="r" style="left:11px;top:305px;width:42px;height:1365px;background:#0a0a0a;"></div>
<div class="r" style="left:11px;top:305px;width:42px;height:50px;background:#6b6b6b;"></div>
<div class="r" style="left:11px;top:355px;width:42px;height:1px;background:#5c5c5c;"></div>
<div class="t" style="top:332.1px;font-size:20.5px;color:#ffffff;left:-568.0px;width:1200px;text-align:center;">1</div>
<div class="r" style="left:11px;top:396px;width:42px;height:1px;background:#5c5c5c;"></div>
<div class="t" style="top:373.1px;font-size:20.5px;color:#ffffff;left:-568.0px;width:1200px;text-align:center;">2</div>
<div class="r" style="left:11px;top:424px;width:42px;height:1px;background:#5c5c5c;"></div>
<div class="t" style="top:401.1px;font-size:20.5px;color:#ffffff;left:-568.0px;width:1200px;text-align:center;">3</div>
<div class="r" style="left:11px;top:456px;width:42px;height:1px;background:#5c5c5c;"></div>
<div class="t" style="top:433.1px;font-size:20.5px;color:#ffffff;left:-568.0px;width:1200px;text-align:center;">4</div>
<div class="r" style="left:11px;top:486px;width:42px;height:1px;background:#5c5c5c;"></div>
<div class="t" style="top:463.1px;font-size:20.5px;color:#ffffff;left:-568.0px;width:1200px;text-align:center;">6</div>
<div class="r" style="left:11px;top:513px;width:42px;height:1px;background:#5c5c5c;"></div>
<div class="t" style="top:490.1px;font-size:20.5px;color:#ffffff;left:-568.0px;width:1200px;text-align:center;">7</div>
<div class="r" style="left:11px;top:542px;width:42px;height:1px;background:#5c5c5c;"></div>
<div class="t" style="top:519.1px;font-size:20.5px;color:#ffffff;left:-568.0px;width:1200px;text-align:center;">13</div>
<div class="r" style="left:11px;top:591px;width:42px;height:1px;background:#5c5c5c;"></div>
<div class="t" style="top:568.1px;font-size:20.5px;color:#ffffff;left:-568.0px;width:1200px;text-align:center;">14</div>
<div class="r" style="left:11px;top:616px;width:42px;height:1px;background:#5c5c5c;"></div>
<div class="t" style="top:593.1px;font-size:20.5px;color:#ffffff;left:-568.0px;width:1200px;text-align:center;">15</div>
<div class="r" style="left:11px;top:652px;width:42px;height:1px;background:#5c5c5c;"></div>
<div class="t" style="top:629.1px;font-size:20.5px;color:#ffffff;left:-568.0px;width:1200px;text-align:center;">16</div>
<div class="r" style="left:11px;top:680px;width:42px;height:1px;background:#5c5c5c;"></div>
<div class="t" style="top:657.1px;font-size:20.5px;color:#ffffff;left:-568.0px;width:1200px;text-align:center;">17</div>
<div class="r" style="left:11px;top:708px;width:42px;height:1px;background:#5c5c5c;"></div>
<div class="t" style="top:685.1px;font-size:20.5px;color:#ffffff;left:-568.0px;width:1200px;text-align:center;">18</div>
<div class="r" style="left:11px;top:736px;width:42px;height:1px;background:#5c5c5c;"></div>
<div class="t" style="top:713.1px;font-size:20.5px;color:#ffffff;left:-568.0px;width:1200px;text-align:center;">19</div>
<div class="r" style="left:11px;top:764px;width:42px;height:1px;background:#5c5c5c;"></div>
<div class="t" style="top:741.1px;font-size:20.5px;color:#ffffff;left:-568.0px;width:1200px;text-align:center;">20</div>
<div class="r" style="left:11px;top:792px;width:42px;height:1px;background:#5c5c5c;"></div>
<div class="t" style="top:769.1px;font-size:20.5px;color:#ffffff;left:-568.0px;width:1200px;text-align:center;">21</div>
<div class="r" style="left:11px;top:820px;width:42px;height:1px;background:#5c5c5c;"></div>
<div class="t" style="top:797.1px;font-size:20.5px;color:#ffffff;left:-568.0px;width:1200px;text-align:center;">22</div>
<div class="r" style="left:11px;top:848px;width:42px;height:1px;background:#5c5c5c;"></div>
<div class="t" style="top:825.1px;font-size:20.5px;color:#ffffff;left:-568.0px;width:1200px;text-align:center;">23</div>
<div class="r" style="left:11px;top:876px;width:42px;height:1px;background:#5c5c5c;"></div>
<div class="t" style="top:853.1px;font-size:20.5px;color:#ffffff;left:-568.0px;width:1200px;text-align:center;">24</div>
<div class="r" style="left:11px;top:904px;width:42px;height:1px;background:#5c5c5c;"></div>
<div class="t" style="top:881.1px;font-size:20.5px;color:#ffffff;left:-568.0px;width:1200px;text-align:center;">25</div>
<div class="r" style="left:11px;top:932px;width:42px;height:1px;background:#5c5c5c;"></div>
<div class="t" style="top:909.1px;font-size:20.5px;color:#ffffff;left:-568.0px;width:1200px;text-align:center;">26</div>
<div class="r" style="left:11px;top:960px;width:42px;height:1px;background:#5c5c5c;"></div>
<div class="t" style="top:937.1px;font-size:20.5px;color:#ffffff;left:-568.0px;width:1200px;text-align:center;">27</div>
<div class="r" style="left:11px;top:988px;width:42px;height:1px;background:#5c5c5c;"></div>
<div class="t" style="top:965.1px;font-size:20.5px;color:#ffffff;left:-568.0px;width:1200px;text-align:center;">28</div>
<div class="r" style="left:11px;top:1016px;width:42px;height:1px;background:#5c5c5c;"></div>
<div class="t" style="top:993.1px;font-size:20.5px;color:#ffffff;left:-568.0px;width:1200px;text-align:center;">29</div>
<div class="r" style="left:11px;top:1044px;width:42px;height:1px;background:#5c5c5c;"></div>
<div class="t" style="top:1021.1px;font-size:20.5px;color:#ffffff;left:-568.0px;width:1200px;text-align:center;">30</div>
<div class="r" style="left:11px;top:1072px;width:42px;height:1px;background:#5c5c5c;"></div>
<div class="t" style="top:1049.1px;font-size:20.5px;color:#ffffff;left:-568.0px;width:1200px;text-align:center;">31</div>
<div class="r" style="left:11px;top:1100px;width:42px;height:1px;background:#5c5c5c;"></div>
<div class="t" style="top:1077.1px;font-size:20.5px;color:#ffffff;left:-568.0px;width:1200px;text-align:center;">32</div>
<div class="r" style="left:11px;top:1128px;width:42px;height:1px;background:#5c5c5c;"></div>
<div class="t" style="top:1105.1px;font-size:20.5px;color:#ffffff;left:-568.0px;width:1200px;text-align:center;">33</div>
<div class="r" style="left:11px;top:1156px;width:42px;height:1px;background:#5c5c5c;"></div>
<div class="t" style="top:1133.1px;font-size:20.5px;color:#ffffff;left:-568.0px;width:1200px;text-align:center;">34</div>
<div class="r" style="left:11px;top:1184px;width:42px;height:1px;background:#5c5c5c;"></div>
<div class="t" style="top:1161.1px;font-size:20.5px;color:#ffffff;left:-568.0px;width:1200px;text-align:center;">35</div>
<div class="r" style="left:11px;top:1212px;width:42px;height:1px;background:#5c5c5c;"></div>
<div class="t" style="top:1189.1px;font-size:20.5px;color:#ffffff;left:-568.0px;width:1200px;text-align:center;">36</div>
<div class="r" style="left:11px;top:1248px;width:42px;height:1px;background:#5c5c5c;"></div>
<div class="t" style="top:1225.1px;font-size:20.5px;color:#ffffff;left:-568.0px;width:1200px;text-align:center;">37</div>
<div class="r" style="left:11px;top:1276px;width:42px;height:1px;background:#5c5c5c;"></div>
<div class="t" style="top:1253.1px;font-size:20.5px;color:#ffffff;left:-568.0px;width:1200px;text-align:center;">38</div>
<div class="r" style="left:11px;top:1304px;width:42px;height:1px;background:#5c5c5c;"></div>
<div class="t" style="top:1281.1px;font-size:20.5px;color:#ffffff;left:-568.0px;width:1200px;text-align:center;">39</div>
<div class="r" style="left:11px;top:1345px;width:42px;height:1px;background:#5c5c5c;"></div>
<div class="t" style="top:1322.1px;font-size:20.5px;color:#ffffff;left:-568.0px;width:1200px;text-align:center;">40</div>
<div class="r" style="left:11px;top:1373px;width:42px;height:1px;background:#5c5c5c;"></div>
<div class="t" style="top:1350.1px;font-size:20.5px;color:#ffffff;left:-568.0px;width:1200px;text-align:center;">41</div>
<div class="r" style="left:11px;top:1401px;width:42px;height:1px;background:#5c5c5c;"></div>
<div class="t" style="top:1378.1px;font-size:20.5px;color:#ffffff;left:-568.0px;width:1200px;text-align:center;">42</div>
<div class="r" style="left:11px;top:1430px;width:42px;height:1px;background:#5c5c5c;"></div>
<div class="t" style="top:1407.1px;font-size:20.5px;color:#ffffff;left:-568.0px;width:1200px;text-align:center;">43</div>
<div class="r" style="left:11px;top:1458px;width:42px;height:1px;background:#5c5c5c;"></div>
<div class="t" style="top:1435.1px;font-size:20.5px;color:#ffffff;left:-568.0px;width:1200px;text-align:center;">44</div>
<div class="r" style="left:11px;top:1486px;width:42px;height:1px;background:#5c5c5c;"></div>
<div class="t" style="top:1463.1px;font-size:20.5px;color:#ffffff;left:-568.0px;width:1200px;text-align:center;">45</div>
<div class="r" style="left:11px;top:1527px;width:42px;height:1px;background:#5c5c5c;"></div>
<div class="t" style="top:1504.1px;font-size:20.5px;color:#ffffff;left:-568.0px;width:1200px;text-align:center;">46</div>
<div class="r" style="left:11px;top:1555px;width:42px;height:1px;background:#5c5c5c;"></div>
<div class="t" style="top:1532.1px;font-size:20.5px;color:#ffffff;left:-568.0px;width:1200px;text-align:center;">47</div>
<div class="r" style="left:11px;top:1584px;width:42px;height:1px;background:#5c5c5c;"></div>
<div class="t" style="top:1561.1px;font-size:20.5px;color:#ffffff;left:-568.0px;width:1200px;text-align:center;">48</div>
<div class="r" style="left:11px;top:1612px;width:42px;height:1px;background:#5c5c5c;"></div>
<div class="t" style="top:1589.1px;font-size:20.5px;color:#ffffff;left:-568.0px;width:1200px;text-align:center;">49</div>
<div class="r" style="left:11px;top:1653px;width:42px;height:1px;background:#5c5c5c;"></div>
<div class="t" style="top:1630.1px;font-size:20.5px;color:#ffffff;left:-568.0px;width:1200px;text-align:center;">50</div>
<div class="r" style="left:11px;top:459px;width:42px;height:1px;background:#5c5c5c;"></div>
<div class="r" style="left:11px;top:515px;width:42px;height:1px;background:#5c5c5c;"></div>
<div class="r" style="left:53px;top:305px;width:1px;height:1365px;background:#a0a0a0;"></div>
<div class="r" style="left:53px;top:305px;width:1px;height:50px;background:#1f7a45;"></div>
<div class="r" style="left:11px;top:305px;width:42px;height:1px;background:#a8a8a8;"></div>
<div class="r" style="left:11px;top:355px;width:42px;height:1px;background:#a8a8a8;"></div>
<div class="r" style="left:2860px;top:278px;width:30px;height:1392px;background:#161616;"></div>
<svg style="left:2866px;top:284px;" width="24" height="14" viewBox="0 0 24 14"><path d="M2 12 L11 2 L20 12 Z" fill="#9a9a9a" stroke="#9a9a9a" stroke-width="1.5" stroke-linejoin="round"/></svg>
<div class="r" style="left:2869px;top:304px;width:13px;height:1310px;background:#9e9e9e;border-radius:7px;"></div>
<svg style="left:2866px;top:1652px;" width="24" height="14" viewBox="0 0 24 14"><path d="M2 2 L11 12 L20 2 Z" fill="#9a9a9a" stroke="#9a9a9a" stroke-width="1.5" stroke-linejoin="round"/></svg>
<div class="r" style="left:11px;top:1670px;width:2879px;height:48px;background:#0a0a0a;"></div>
<svg style="left:43px;top:1683px;" width="16" height="20" viewBox="0 0 16 20"><path d="M11 3 L4 10 L11 17" stroke="#aaa" stroke-width="1.6" fill="none"/></svg>
<svg style="left:92px;top:1683px;" width="16" height="20" viewBox="0 0 16 20"><path d="M4 3 L11 10 L4 17" stroke="#aaa" stroke-width="1.6" fill="none"/></svg>
<div class="t" style="top:1684.8px;font-size:21.5px;color:#ffffff;letter-spacing:-0.5px;left:-368.5px;width:1200px;text-align:center;">Contents</div>
<div class="r" style="left:292px;top:1681px;width:1px;height:28px;background:#666;"></div>
<div class="r" style="left:299px;top:1676.5px;width:127px;height:35.5px;background:#fcec6a;border-radius:6px;"></div>
<div class="t" style="top:1684.8px;font-size:21.5px;color:#111;letter-spacing:-0.5px;left:-237.5px;width:1200px;text-align:center;text-indent:-0.5px;">Dashboard</div>
<div class="r" style="left:432.5px;top:1681px;width:1.0px;height:28px;background:#666;"></div>
<div class="r" style="left:440px;top:1676.5px;width:106px;height:35.5px;background:#fcec6a;border-radius:6px;"></div>
<div class="t" style="top:1684.8px;font-size:21.5px;color:#111;letter-spacing:-0.92px;left:-107.0px;width:1200px;text-align:center;text-indent:-0.92px;">Revenue</div>
<div class="r" style="left:552.5px;top:1681px;width:1.0px;height:28px;background:#666;"></div>
<div class="r" style="left:559px;top:1676.5px;width:157px;height:35.5px;background:#fcec6a;border-radius:6px;"></div>
<div class="t" style="top:1684.8px;font-size:21.5px;color:#111;letter-spacing:-0.5px;left:37.5px;width:1200px;text-align:center;text-indent:-0.5px;transform:scaleX(0.94);">COGS &amp; OPEX</div>
<div class="r" style="left:722.5px;top:1681px;width:1.0px;height:28px;background:#666;"></div>
<div class="r" style="left:730.5px;top:1676.5px;width:88.10000000000002px;height:35.5px;background:#fcec6a;border-radius:6px;"></div>
<div class="t" style="top:1684.8px;font-size:21.5px;color:#111;letter-spacing:-0.5px;left:174.5px;width:1200px;text-align:center;text-indent:-0.5px;">Payroll</div>
<div class="r" style="left:825.1px;top:1681px;width:1.0px;height:28px;background:#666;"></div>
<div class="r" style="left:832px;top:1670px;width:87px;height:42px;background:#fff;border-radius:0 0 6px 6px;"></div>
<div class="t" style="top:1678.8px;font-size:21.5px;color:#111;letter-spacing:-0.5px;left:275.5px;width:1200px;text-align:center;text-indent:-0.5px;transform:scaleX(0.89);">CAPEX</div>
<div class="r" style="left:844px;top:1704px;width:63px;height:3px;background:#1f7a45;"></div>
<div class="r" style="left:925.5px;top:1681px;width:1.0px;height:28px;background:#666;"></div>
<div class="r" style="left:932.6px;top:1676.5px;width:111.99999999999989px;height:35.5px;background:#fcec6a;border-radius:6px;"></div>
<div class="t" style="top:1684.8px;font-size:21.5px;color:#111;letter-spacing:-0.5px;left:388.6px;width:1200px;text-align:center;text-indent:-0.5px;">CapTable</div>
<div class="r" style="left:1051.1px;top:1681px;width:1.0px;height:28px;background:#666;"></div>
<div class="r" style="left:1058px;top:1676.5px;width:89.59999999999991px;height:35.5px;background:#fcec6a;border-radius:6px;"></div>
<div class="t" style="top:1684.8px;font-size:21.5px;color:#111;letter-spacing:-0.65px;left:502.8px;width:1200px;text-align:center;text-indent:-0.65px;">Capital</div>
<div class="r" style="left:1154.1px;top:1681px;width:1.0px;height:28px;background:#666;"></div>
<div class="r" style="left:1161px;top:1676.5px;width:41.40000000000009px;height:35.5px;background:#4aaee0;border-radius:6px;"></div>
<div class="t" style="top:1684.8px;font-size:21.5px;color:#111;letter-spacing:-0.5px;left:581.7px;width:1200px;text-align:center;text-indent:-0.5px;transform:scaleX(0.88);">IS</div>
<div class="r" style="left:1208.9px;top:1681px;width:1.0px;height:28px;background:#666;"></div>
<div class="r" style="left:1215.8px;top:1676.5px;width:47.90000000000009px;height:35.5px;background:#4aaee0;border-radius:6px;"></div>
<div class="t" style="top:1684.8px;font-size:21.5px;color:#111;letter-spacing:-0.5px;left:639.8px;width:1200px;text-align:center;text-indent:-0.5px;transform:scaleX(0.87);">CF</div>
<div class="r" style="left:1270.2px;top:1681px;width:1.0px;height:28px;background:#666;"></div>
<div class="r" style="left:1276.7px;top:1676.5px;width:47.899999999999864px;height:35.5px;background:#4aaee0;border-radius:6px;"></div>
<div class="t" style="top:1684.8px;font-size:21.5px;color:#111;letter-spacing:-0.5px;left:700.7px;width:1200px;text-align:center;text-indent:-0.5px;transform:scaleX(0.82);">BS</div>
<div class="r" style="left:1331.1px;top:1681px;width:1.0px;height:28px;background:#666;"></div>
<div class="r" style="left:1338.4px;top:1676.5px;width:114.0px;height:35.5px;background:#4aaee0;border-radius:6px;"></div>
<div class="t" style="top:1684.8px;font-size:21.5px;color:#111;letter-spacing:-0.87px;left:795.4px;width:1200px;text-align:center;text-indent:-0.87px;">Scenarios</div>
<div class="r" style="left:1458.9px;top:1681px;width:1.0px;height:28px;background:#666;"></div>
<div class="r" style="left:1466px;top:1676.5px;width:114.29999999999995px;height:35.5px;background:#4aaee0;border-radius:6px;"></div>
<div class="t" style="top:1684.8px;font-size:21.5px;color:#111;letter-spacing:0.15px;left:923.2px;width:1200px;text-align:center;text-indent:0.15px;">Valuation</div>
<div class="r" style="left:1586.8px;top:1681px;width:1.0px;height:28px;background:#666;"></div>
<div class="r" style="left:1594.5px;top:1676.5px;width:113.20000000000005px;height:35.5px;background:#4aaee0;border-radius:6px;"></div>
<div class="t" style="top:1684.8px;font-size:21.5px;color:#111;letter-spacing:-0.6px;left:1051.1px;width:1200px;text-align:center;text-indent:-0.6px;">Summary</div>
<div class="r" style="left:1714.2px;top:1681px;width:1.0px;height:28px;background:#666;"></div>
<div class="r" style="left:1721px;top:1676.5px;width:48px;height:35.5px;background:#4aaee0;border-radius:6px;"></div>
<div class="t" style="top:1684.8px;font-size:21.5px;color:#111;letter-spacing:-0.5px;left:1145.0px;width:1200px;text-align:center;text-indent:-0.5px;transform:scaleX(0.81);">BE</div>
<div class="r" style="left:1775.5px;top:1681px;width:1.0px;height:28px;background:#666;"></div>
<div class="r" style="left:1782px;top:1676.5px;width:72.20000000000005px;height:35.5px;background:#4aaee0;border-radius:6px;"></div>
<div class="t" style="top:1684.8px;font-size:21.5px;color:#111;letter-spacing:-0.5px;left:1218.1px;width:1200px;text-align:center;text-indent:-0.5px;transform:scaleX(0.94);">ROIC</div>
<div class="r" style="left:1860.7px;top:1681px;width:1.0px;height:28px;background:#666;"></div>
<div class="r" style="left:1867px;top:1676.5px;width:84.59999999999991px;height:35.5px;background:#4aaee0;border-radius:6px;"></div>
<div class="t" style="top:1684.8px;font-size:21.5px;color:#111;letter-spacing:-0.6px;left:1309.3px;width:1200px;text-align:center;text-indent:-0.6px;">Charts</div>
<div class="r" style="left:1958.1px;top:1681px;width:1.0px;height:28px;background:#666;"></div>
<div class="r" style="left:1965px;top:1676.5px;width:64px;height:35.5px;background:#4aaee0;border-radius:6px;"></div>
<div class="t" style="top:1684.8px;font-size:21.5px;color:#111;letter-spacing:-0.5px;left:1397.0px;width:1200px;text-align:center;text-indent:-0.5px;transform:scaleX(0.91);">KPIs</div>
<div class="r" style="left:2035.5px;top:1681px;width:1.0px;height:28px;background:#666;"></div>
<div style="position:absolute;left:2042px;top:1676.5px;width:30px;height:35.5px;overflow:hidden"><div style="position:absolute;left:0;top:0;width:80px;height:35.5px;background:#4aaee0;border-radius:6px"></div><div class="t" style="left:4px;top:8.7px;font-size:21px;color:#111">Sc</div></div>
<svg style="left:2083px;top:1686px;" width="26" height="14" viewBox="0 0 26 14"><circle cx="5" cy="7" r="2.3" fill="#ddd"/><circle cx="12" cy="7" r="2.3" fill="#ddd"/><circle cx="19" cy="7" r="2.3" fill="#ddd"/></svg>
<svg style="left:2133px;top:1683px;" width="22" height="22" viewBox="0 0 22 22"><path d="M11 2 L11 20 M2 11 L20 11" stroke="#ddd" stroke-width="1.8"/></svg>
<svg style="left:2186px;top:1681px;" width="12" height="26" viewBox="0 0 12 26"><circle cx="6" cy="5" r="2" fill="#ddd"/><circle cx="6" cy="13" r="2" fill="#ddd"/><circle cx="6" cy="21" r="2" fill="#ddd"/></svg>
<div class="r" style="left:2217px;top:1681px;width:643px;height:24px;background:#1c1c1c;border-radius:12px;"></div>
<svg style="left:2223px;top:1686px;" width="14" height="14" viewBox="0 0 14 14"><path d="M11 2 L3 7 L11 12 Z" fill="#9a9a9a"/></svg>
<div class="r" style="left:2241.6px;top:1687px;width:54.90000000000009px;height:12px;background:#9e9e9e;border-radius:6px;"></div>
<svg style="left:2836px;top:1686px;" width="14" height="14" viewBox="0 0 14 14"><path d="M3 2 L11 7 L3 12 Z" fill="#9a9a9a"/></svg>
<div class="r" style="left:11px;top:1718px;width:2879px;height:33px;background:#141414;"></div>
<div class="r" style="left:11px;top:1718px;width:2879px;height:1px;background:#333333;"></div>
<div class="t" style="top:1727.9px;font-size:16px;color:#ddd;letter-spacing:-0.3px;left:27.0px;">Ready</div>
<svg style="left:98px;top:1724px;" width="24" height="24" viewBox="0 0 24 24"><rect x="2" y="3" width="18" height="16" stroke="#ccc" stroke-width="1.5" fill="none"/><path d="M2 7 L20 7 M5 10 L9 10 M5 13 L9 13" stroke="#ccc" stroke-width="1.3"/><circle cx="15" cy="15" r="5" stroke="#ccc" stroke-width="1.5" fill="#161616"/><circle cx="15" cy="15" r="1.8" fill="#ccc"/></svg>
<svg style="left:144px;top:1722px;" width="26" height="26" viewBox="0 0 26 26"><circle cx="10" cy="4" r="2.5" stroke="#ccc" stroke-width="1.4" fill="none"/><path d="M2 8 L18 8 M10 8 L10 15 L5 23 M10 15 L13 19 M15 16 L23 24 M23 16 L15 24" stroke="#ccc" stroke-width="1.5" fill="none"/></svg>
<div class="t" style="top:1727.9px;font-size:16px;color:#ddd;font-weight:700;letter-spacing:-0.25px;left:173.0px;">Accessibility: Investigate</div>
<div class="r" style="left:2445px;top:1718px;width:60px;height:33px;background:#2a2a2a;"></div>
<svg style="left:2462px;top:1723px;" width="26" height="24" viewBox="0 0 26 24"><rect x="2" y="2" width="20" height="20" stroke="#ddd" stroke-width="1.5" fill="none"/><path d="M2 9 L22 9 M2 15 L22 15 M9 2 L9 22 M15 2 L15 22" stroke="#ddd" stroke-width="1.5"/></svg>
<svg style="left:2522px;top:1723px;" width="26" height="24" viewBox="0 0 26 24"><rect x="2" y="2" width="20" height="20" stroke="#ddd" stroke-width="1.5" fill="none"/><rect x="6" y="6" width="12" height="13" stroke="#ddd" stroke-width="1.3" fill="none"/><path d="M8 10 L16 10 M8 13 L16 13 M8 16 L16 16" stroke="#ddd" stroke-width="1.2"/></svg>
<svg style="left:2581px;top:1723px;" width="26" height="24" viewBox="0 0 26 24"><path d="M2 2 L2 22 L22 22 L22 2 M2 2 L8 2 L8 15 L15 15 L15 2 L22 2" stroke="#ddd" stroke-width="1.5" fill="none"/></svg>
<div class="r" style="left:2633px;top:1733px;width:12px;height:2px;background:#ccc;"></div>
<div class="r" style="left:2653px;top:1733px;width:148px;height:1px;background:#aaa;"></div>
<div class="r" style="left:2727px;top:1730px;width:2px;height:7px;background:#aaa;"></div>
<div class="r" style="left:2733px;top:1726px;width:8px;height:16px;background:#ccc;"></div>
<svg style="left:2805px;top:1725px;" width="18" height="18" viewBox="0 0 18 18"><path d="M9 1 L9 17 M1 9 L17 9" stroke="#ccc" stroke-width="1.6"/></svg>
<div class="t" style="top:1727.0px;font-size:17px;color:#ddd;left:2259.0px;width:1200px;text-align:center;">140%</div></body></html>
